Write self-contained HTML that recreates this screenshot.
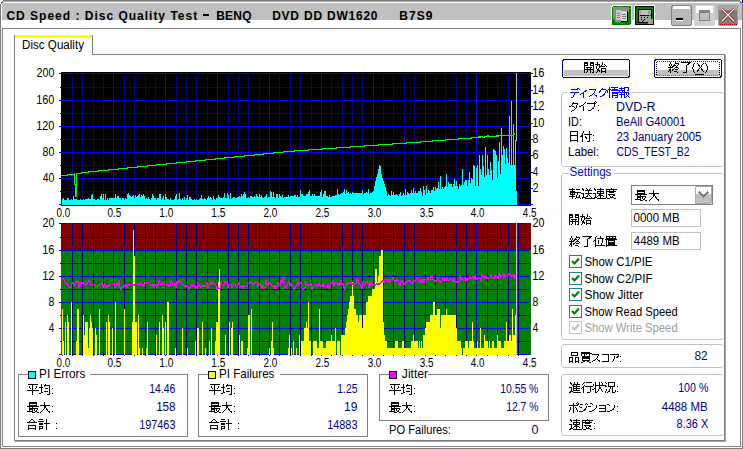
<!DOCTYPE html>
<html><head><meta charset="utf-8"><style>
html,body{margin:0;padding:0;width:743px;height:449px;overflow:hidden;background:#fff}
svg{display:block}
text{font-family:"Liberation Sans",sans-serif}
</style></head><body>
<svg width="743" height="449" viewBox="0 0 743 449" shape-rendering="crispEdges">
<rect x="0" y="0" width="743" height="449" fill="#ffffff"/>
<rect x="0" y="0" width="743" height="20" fill="#c0c0c0"/>
<rect x="3" y="0" width="740" height="1" fill="#7a7a7a"/>
<rect x="4" y="1" width="737" height="1" fill="#a8a8a8"/>
<rect x="4" y="2" width="737" height="1" fill="#ffffff"/>
<rect x="0" y="4" width="1" height="445" fill="#7a7a7a"/>
<rect x="1" y="4" width="1" height="445" fill="#ffffff"/>
<rect x="0" y="0" width="3" height="3" fill="#ffffff"/>
<rect x="0" y="0" width="2" height="4" fill="#ffffff"/>
<rect x="1" y="2" width="1" height="2" fill="#7a7a7a"/>
<rect x="2" y="1" width="1" height="2" fill="#7a7a7a"/>
<rect x="742" y="4" width="1" height="445" fill="#7a7a7a"/>
<rect x="740" y="0" width="3" height="3" fill="#ffffff"/>
<rect x="741" y="2" width="1" height="2" fill="#7a7a7a"/>
<rect x="740" y="1" width="1" height="2" fill="#7a7a7a"/>
<rect x="0" y="448" width="743" height="1" fill="#7a7a7a"/>
<rect x="2" y="20" width="739" height="8" fill="#ffffff"/>
<rect x="2" y="28" width="739" height="1" fill="#808080"/>
<rect x="2" y="28" width="1" height="419" fill="#808080"/>
<rect x="740" y="28" width="1" height="419" fill="#808080"/>
<rect x="2" y="446" width="739" height="1" fill="#808080"/>
<text x="6.44" y="20" fill="#000" font-size="12" font-weight="bold" textLength="190.72" lengthAdjust="spacing">CD Speed : Disc Quality Test</text>
<rect x="203" y="14" width="6" height="2" fill="#000"/>
<text x="216.21" y="20" fill="#000" font-size="12" font-weight="bold" textLength="35.34" lengthAdjust="spacing">BENQ</text>
<text x="272.14" y="20" fill="#000" font-size="12" font-weight="bold" textLength="105.41" lengthAdjust="spacing">DVD DD DW1620</text>
<text x="399.13" y="20" fill="#000" font-size="12" font-weight="bold" textLength="33.35" lengthAdjust="spacing">B7S9</text>
<rect x="611" y="5" width="21" height="21" fill="#ffffff" rx="2"/>
<rect x="612" y="6" width="19" height="19" fill="#008000" rx="2"/>
<path d="M613 7h15l1 1v2l-3 3v9h-10l-3 -3z" fill="#8c8c8c"/>
<rect x="616" y="10" width="5" height="10" fill="#c8c8c8"/>
<rect x="617" y="13" width="3" height="1" fill="#808080"/>
<rect x="617" y="15" width="3" height="1" fill="#808080"/>
<rect x="617" y="17" width="3" height="1" fill="#808080"/>
<rect x="621" y="11" width="7" height="11" fill="#000000"/>
<rect x="621" y="11" width="6" height="10" fill="#d8d8d8"/>
<rect x="622" y="14" width="4" height="1" fill="#808080"/>
<rect x="622" y="16" width="4" height="1" fill="#808080"/>
<rect x="622" y="18" width="4" height="1" fill="#808080"/>
<rect x="626" y="9" width="1" height="1" fill="#00ff00"/>
<rect x="628" y="11" width="1" height="1" fill="#00ff00"/>
<rect x="629" y="8" width="1" height="1" fill="#00ff00"/>
<rect x="614" y="15" width="1" height="1" fill="#00ff00"/>
<rect x="614" y="19" width="1" height="1" fill="#00ff00"/>
<rect x="615" y="21" width="1" height="1" fill="#00ff00"/>
<rect x="617" y="22" width="1" height="1" fill="#00ff00"/>
<rect x="619" y="22" width="1" height="1" fill="#00ff00"/>
<rect x="622" y="23" width="1" height="1" fill="#00ff00"/>
<rect x="620" y="6" width="1" height="1" fill="#00ff00"/>
<rect x="634" y="5" width="21" height="21" fill="#ffffff" rx="2"/>
<rect x="635" y="6" width="19" height="19" fill="#000000"/>
<rect x="636" y="7" width="17" height="17" fill="#008000"/>
<rect x="638" y="9" width="14" height="14" fill="#000000"/>
<rect x="639" y="10" width="12" height="12" fill="#a0a0a0"/>
<rect x="648" y="19" width="5" height="5" fill="#a0a0a0"/>
<rect x="641" y="10" width="7" height="5" fill="#c0c0c0"/>
<rect x="640" y="15" width="9" height="1" fill="#000000"/>
<rect x="641" y="17" width="1" height="1" fill="#000000"/>
<rect x="644" y="17" width="1" height="1" fill="#000000"/>
<rect x="647" y="17" width="1" height="1" fill="#000000"/>
<rect x="641" y="19" width="1" height="1" fill="#000000"/>
<rect x="643" y="20" width="1" height="1" fill="#000000"/>
<rect x="644" y="19" width="1" height="1" fill="#000000"/>
<rect x="642" y="21" width="1" height="1" fill="#000000"/>
<rect x="646" y="15" width="1" height="1" fill="#ff0000"/>
<rect x="650" y="15" width="1" height="1" fill="#ff0000"/>
<rect x="671" y="5" width="21" height="21" fill="#808080" rx="3"/>
<rect x="672" y="6" width="19" height="19" fill="#b8b8b8" rx="2"/>
<rect x="673" y="6" width="17" height="3" fill="#ffffff"/>
<rect x="676" y="18" width="7" height="2" fill="#000000"/>
<rect x="676" y="20" width="7" height="1" fill="#ffffff"/>
<rect x="694" y="5" width="21" height="21" fill="#d0d0d0" rx="3"/>
<rect x="696" y="6" width="17" height="7" fill="#ffffff"/>
<rect x="699" y="10" width="11" height="11" fill="#808080"/>
<rect x="700" y="13" width="9" height="7" fill="#c0c0c0"/>
<rect x="718" y="5" width="20" height="21" fill="#a0a0a0" rx="3"/>
<rect x="719" y="6" width="18" height="19" fill="#7c7c7c" rx="2"/>
<rect x="719" y="6" width="18" height="4" fill="#a8a8a8"/>
<path d="M722 9 L734 21 M734 9 L722 21" stroke="#b00000" stroke-width="2.6" shape-rendering="auto"/>
<path d="M722 9 L734 21 M734 9 L722 21" stroke="#ffffff" stroke-width="1.3" shape-rendering="auto"/>
<rect x="720" y="24" width="1" height="1" fill="#c00000"/>
<rect x="722" y="24" width="1" height="1" fill="#c00000"/>
<rect x="724" y="24" width="1" height="1" fill="#c00000"/>
<rect x="726" y="24" width="1" height="1" fill="#c00000"/>
<rect x="728" y="24" width="1" height="1" fill="#c00000"/>
<rect x="730" y="24" width="1" height="1" fill="#c00000"/>
<rect x="732" y="24" width="1" height="1" fill="#c00000"/>
<rect x="734" y="24" width="1" height="1" fill="#c00000"/>
<rect x="736" y="24" width="1" height="1" fill="#c00000"/>
<rect x="742" y="0" width="1" height="3" fill="#0000ff"/>
<rect x="14" y="35" width="1" height="20" fill="#808080"/>
<rect x="92" y="35" width="1" height="20" fill="#808080"/>
<rect x="15" y="35" width="77" height="3" fill="#ffff00"/>
<text x="22.07" y="49" fill="#000" font-size="12" font-weight="normal" textLength="61.92" lengthAdjust="spacingAndGlyphs">Disc Quality</text>
<rect x="92" y="54" width="633" height="1" fill="#808080"/>
<rect x="14" y="54" width="1" height="387" fill="#808080"/>
<rect x="724" y="54" width="1" height="388" fill="#808080"/>
<rect x="725" y="55" width="1" height="387" fill="#a0a0a0"/>
<rect x="14" y="440" width="712" height="1" fill="#808080"/>
<rect x="15" y="441" width="711" height="1" fill="#a0a0a0"/>
<rect x="61" y="72" width="470" height="134" fill="#000000"/>
<rect x="61" y="223" width="470" height="132" fill="#008000"/>
<rect x="61" y="223" width="470" height="27" fill="#800000"/>
<rect x="61" y="204" width="468" height="1" fill="#0000ff"/>
<rect x="61" y="191" width="468" height="1" fill="#000090"/>
<rect x="61" y="178" width="468" height="1" fill="#0000ff"/>
<rect x="61" y="165" width="468" height="1" fill="#000090"/>
<rect x="61" y="152" width="468" height="1" fill="#0000ff"/>
<rect x="61" y="139" width="468" height="1" fill="#000090"/>
<rect x="61" y="126" width="468" height="1" fill="#0000ff"/>
<rect x="61" y="113" width="468" height="1" fill="#000090"/>
<rect x="61" y="100" width="468" height="1" fill="#0000ff"/>
<rect x="61" y="87" width="468" height="1" fill="#000090"/>
<rect x="61" y="73" width="468" height="1" fill="#0000ff"/>
<rect x="72" y="73" width="1" height="132" fill="#000090"/>
<rect x="82" y="73" width="1" height="132" fill="#000090"/>
<rect x="93" y="73" width="1" height="132" fill="#000090"/>
<rect x="103" y="73" width="1" height="132" fill="#000090"/>
<rect x="113" y="73" width="1" height="132" fill="#0000ff"/>
<rect x="124" y="73" width="1" height="132" fill="#000090"/>
<rect x="134" y="73" width="1" height="132" fill="#000090"/>
<rect x="145" y="73" width="1" height="132" fill="#000090"/>
<rect x="155" y="73" width="1" height="132" fill="#000090"/>
<rect x="165" y="73" width="1" height="132" fill="#0000ff"/>
<rect x="176" y="73" width="1" height="132" fill="#000090"/>
<rect x="186" y="73" width="1" height="132" fill="#000090"/>
<rect x="196" y="73" width="1" height="132" fill="#000090"/>
<rect x="207" y="73" width="1" height="132" fill="#000090"/>
<rect x="217" y="73" width="1" height="132" fill="#0000ff"/>
<rect x="228" y="73" width="1" height="132" fill="#000090"/>
<rect x="238" y="73" width="1" height="132" fill="#000090"/>
<rect x="248" y="73" width="1" height="132" fill="#000090"/>
<rect x="259" y="73" width="1" height="132" fill="#000090"/>
<rect x="269" y="73" width="1" height="132" fill="#0000ff"/>
<rect x="279" y="73" width="1" height="132" fill="#000090"/>
<rect x="290" y="73" width="1" height="132" fill="#000090"/>
<rect x="300" y="73" width="1" height="132" fill="#000090"/>
<rect x="311" y="73" width="1" height="132" fill="#000090"/>
<rect x="321" y="73" width="1" height="132" fill="#0000ff"/>
<rect x="331" y="73" width="1" height="132" fill="#000090"/>
<rect x="342" y="73" width="1" height="132" fill="#000090"/>
<rect x="352" y="73" width="1" height="132" fill="#000090"/>
<rect x="362" y="73" width="1" height="132" fill="#000090"/>
<rect x="373" y="73" width="1" height="132" fill="#0000ff"/>
<rect x="383" y="73" width="1" height="132" fill="#000090"/>
<rect x="393" y="73" width="1" height="132" fill="#000090"/>
<rect x="404" y="73" width="1" height="132" fill="#000090"/>
<rect x="414" y="73" width="1" height="132" fill="#000090"/>
<rect x="425" y="73" width="1" height="132" fill="#0000ff"/>
<rect x="435" y="73" width="1" height="132" fill="#000090"/>
<rect x="445" y="73" width="1" height="132" fill="#000090"/>
<rect x="456" y="73" width="1" height="132" fill="#000090"/>
<rect x="466" y="73" width="1" height="132" fill="#000090"/>
<rect x="476" y="73" width="1" height="132" fill="#0000ff"/>
<rect x="487" y="73" width="1" height="132" fill="#000090"/>
<rect x="497" y="73" width="1" height="132" fill="#000090"/>
<rect x="508" y="73" width="1" height="132" fill="#000090"/>
<rect x="518" y="73" width="1" height="132" fill="#000090"/>
<rect x="61" y="354" width="468" height="1" fill="#0000ff"/>
<rect x="61" y="341" width="468" height="1" fill="#000090"/>
<rect x="61" y="328" width="468" height="1" fill="#0000ff"/>
<rect x="61" y="315" width="468" height="1" fill="#000090"/>
<rect x="61" y="302" width="468" height="1" fill="#0000ff"/>
<rect x="61" y="289" width="468" height="1" fill="#000090"/>
<rect x="61" y="276" width="468" height="1" fill="#0000ff"/>
<rect x="61" y="263" width="468" height="1" fill="#000090"/>
<rect x="61" y="250" width="468" height="1" fill="#0000ff"/>
<rect x="61" y="237" width="468" height="1" fill="#000090"/>
<rect x="61" y="223" width="468" height="1" fill="#0000ff"/>
<rect x="72" y="223" width="1" height="132" fill="#000090"/>
<rect x="82" y="223" width="1" height="132" fill="#000090"/>
<rect x="93" y="223" width="1" height="132" fill="#000090"/>
<rect x="103" y="223" width="1" height="132" fill="#000090"/>
<rect x="113" y="223" width="1" height="132" fill="#0000ff"/>
<rect x="124" y="223" width="1" height="132" fill="#000090"/>
<rect x="134" y="223" width="1" height="132" fill="#000090"/>
<rect x="145" y="223" width="1" height="132" fill="#000090"/>
<rect x="155" y="223" width="1" height="132" fill="#000090"/>
<rect x="165" y="223" width="1" height="132" fill="#0000ff"/>
<rect x="176" y="223" width="1" height="132" fill="#000090"/>
<rect x="186" y="223" width="1" height="132" fill="#000090"/>
<rect x="196" y="223" width="1" height="132" fill="#000090"/>
<rect x="207" y="223" width="1" height="132" fill="#000090"/>
<rect x="217" y="223" width="1" height="132" fill="#0000ff"/>
<rect x="228" y="223" width="1" height="132" fill="#000090"/>
<rect x="238" y="223" width="1" height="132" fill="#000090"/>
<rect x="248" y="223" width="1" height="132" fill="#000090"/>
<rect x="259" y="223" width="1" height="132" fill="#000090"/>
<rect x="269" y="223" width="1" height="132" fill="#0000ff"/>
<rect x="279" y="223" width="1" height="132" fill="#000090"/>
<rect x="290" y="223" width="1" height="132" fill="#000090"/>
<rect x="300" y="223" width="1" height="132" fill="#000090"/>
<rect x="311" y="223" width="1" height="132" fill="#000090"/>
<rect x="321" y="223" width="1" height="132" fill="#0000ff"/>
<rect x="331" y="223" width="1" height="132" fill="#000090"/>
<rect x="342" y="223" width="1" height="132" fill="#000090"/>
<rect x="352" y="223" width="1" height="132" fill="#000090"/>
<rect x="362" y="223" width="1" height="132" fill="#000090"/>
<rect x="373" y="223" width="1" height="132" fill="#0000ff"/>
<rect x="383" y="223" width="1" height="132" fill="#000090"/>
<rect x="393" y="223" width="1" height="132" fill="#000090"/>
<rect x="404" y="223" width="1" height="132" fill="#000090"/>
<rect x="414" y="223" width="1" height="132" fill="#000090"/>
<rect x="425" y="223" width="1" height="132" fill="#0000ff"/>
<rect x="435" y="223" width="1" height="132" fill="#000090"/>
<rect x="445" y="223" width="1" height="132" fill="#000090"/>
<rect x="456" y="223" width="1" height="132" fill="#000090"/>
<rect x="466" y="223" width="1" height="132" fill="#000090"/>
<rect x="476" y="223" width="1" height="132" fill="#0000ff"/>
<rect x="487" y="223" width="1" height="132" fill="#000090"/>
<rect x="497" y="223" width="1" height="132" fill="#000090"/>
<rect x="508" y="223" width="1" height="132" fill="#000090"/>
<rect x="518" y="223" width="1" height="132" fill="#000090"/>
<path d="M62 199h1V205h-1zM63 198h1V205h-1zM64 200h1V205h-1zM65 200h1V205h-1zM66 200h1V205h-1zM67 198h1V205h-1zM68 198h1V205h-1zM69 200h1V205h-1zM70 200h1V205h-1zM71 199h1V205h-1zM72 200h1V205h-1zM73 196h1V205h-1zM74 199h1V205h-1zM75 199h1V205h-1zM76 199h1V205h-1zM77 200h1V205h-1zM78 200h1V205h-1zM79 200h1V205h-1zM80 199h1V205h-1zM81 200h1V205h-1zM82 200h1V205h-1zM83 199h1V205h-1zM84 200h1V205h-1zM85 199h1V205h-1zM86 199h1V205h-1zM87 199h1V205h-1zM88 198h1V205h-1zM89 199h1V205h-1zM90 199h1V205h-1zM91 195h1V205h-1zM92 194h1V205h-1zM93 199h1V205h-1zM94 199h1V205h-1zM95 200h1V205h-1zM96 200h1V205h-1zM97 199h1V205h-1zM98 199h1V205h-1zM99 200h1V205h-1zM100 196h1V205h-1zM101 194h1V205h-1zM102 198h1V205h-1zM103 194h1V205h-1zM104 200h1V205h-1zM105 194h1V205h-1zM106 200h1V205h-1zM107 198h1V205h-1zM108 200h1V205h-1zM109 198h1V205h-1zM110 198h1V205h-1zM111 198h1V205h-1zM112 198h1V205h-1zM113 198h1V205h-1zM114 198h1V205h-1zM115 194h1V205h-1zM116 198h1V205h-1zM117 196h1V205h-1zM118 196h1V205h-1zM119 198h1V205h-1zM120 198h1V205h-1zM121 200h1V205h-1zM122 198h1V205h-1zM123 198h1V205h-1zM124 200h1V205h-1zM125 198h1V205h-1zM126 199h1V205h-1zM127 194h1V205h-1zM128 193h1V205h-1zM129 195h1V205h-1zM130 196h1V205h-1zM131 197h1V205h-1zM132 196h1V205h-1zM133 195h1V205h-1zM134 198h1V205h-1zM135 195h1V205h-1zM136 197h1V205h-1zM137 196h1V205h-1zM138 195h1V205h-1zM139 194h1V205h-1zM140 197h1V205h-1zM141 195h1V205h-1zM142 196h1V205h-1zM143 194h1V205h-1zM144 196h1V205h-1zM145 199h1V205h-1zM146 198h1V205h-1zM147 199h1V205h-1zM148 197h1V205h-1zM149 199h1V205h-1zM150 200h1V205h-1zM151 198h1V205h-1zM152 194h1V205h-1zM153 196h1V205h-1zM154 198h1V205h-1zM155 198h1V205h-1zM156 200h1V205h-1zM157 198h1V205h-1zM158 198h1V205h-1zM159 194h1V205h-1zM160 194h1V205h-1zM161 200h1V205h-1zM162 198h1V205h-1zM163 196h1V205h-1zM164 200h1V205h-1zM165 194h1V205h-1zM166 197h1V205h-1zM167 199h1V205h-1zM168 199h1V205h-1zM169 200h1V205h-1zM170 198h1V205h-1zM171 200h1V205h-1zM172 200h1V205h-1zM173 200h1V205h-1zM174 199h1V205h-1zM175 196h1V205h-1zM176 194h1V205h-1zM177 200h1V205h-1zM178 199h1V205h-1zM179 193h1V205h-1zM180 199h1V205h-1zM181 200h1V205h-1zM182 198h1V205h-1zM183 200h1V205h-1zM184 197h1V205h-1zM185 200h1V205h-1zM186 198h1V205h-1zM187 195h1V205h-1zM188 200h1V205h-1zM189 197h1V205h-1zM190 197h1V205h-1zM191 199h1V205h-1zM192 200h1V205h-1zM193 200h1V205h-1zM194 199h1V205h-1zM195 200h1V205h-1zM196 199h1V205h-1zM197 200h1V205h-1zM198 200h1V205h-1zM199 199h1V205h-1zM200 198h1V205h-1zM201 195h1V205h-1zM202 199h1V205h-1zM203 199h1V205h-1zM204 198h1V205h-1zM205 199h1V205h-1zM206 200h1V205h-1zM207 198h1V205h-1zM208 196h1V205h-1zM209 198h1V205h-1zM210 197h1V205h-1zM211 198h1V205h-1zM212 200h1V205h-1zM213 196h1V205h-1zM214 199h1V205h-1zM215 200h1V205h-1zM216 198h1V205h-1zM217 198h1V205h-1zM218 195h1V205h-1zM219 197h1V205h-1zM220 198h1V205h-1zM221 198h1V205h-1zM222 198h1V205h-1zM223 197h1V205h-1zM224 193h1V205h-1zM225 198h1V205h-1zM226 198h1V205h-1zM227 193h1V205h-1zM228 195h1V205h-1zM229 199h1V205h-1zM230 193h1V205h-1zM231 199h1V205h-1zM232 198h1V205h-1zM233 197h1V205h-1zM234 197h1V205h-1zM235 198h1V205h-1zM236 198h1V205h-1zM237 197h1V205h-1zM238 197h1V205h-1zM239 196h1V205h-1zM240 197h1V205h-1zM241 194h1V205h-1zM242 196h1V205h-1zM243 194h1V205h-1zM244 192h1V205h-1zM245 194h1V205h-1zM246 198h1V205h-1zM247 198h1V205h-1zM248 197h1V205h-1zM249 198h1V205h-1zM250 196h1V205h-1zM251 196h1V205h-1zM252 197h1V205h-1zM253 197h1V205h-1zM254 196h1V205h-1zM255 197h1V205h-1zM256 194h1V205h-1zM257 196h1V205h-1zM258 197h1V205h-1zM259 194h1V205h-1zM260 197h1V205h-1zM261 195h1V205h-1zM262 197h1V205h-1zM263 198h1V205h-1zM264 197h1V205h-1zM265 196h1V205h-1zM266 194h1V205h-1zM267 198h1V205h-1zM268 197h1V205h-1zM269 197h1V205h-1zM270 191h1V205h-1zM271 192h1V205h-1zM272 197h1V205h-1zM273 192h1V205h-1zM274 197h1V205h-1zM275 198h1V205h-1zM276 194h1V205h-1zM277 194h1V205h-1zM278 198h1V205h-1zM279 194h1V205h-1zM280 196h1V205h-1zM281 197h1V205h-1zM282 195h1V205h-1zM283 198h1V205h-1zM284 197h1V205h-1zM285 197h1V205h-1zM286 197h1V205h-1zM287 197h1V205h-1zM288 195h1V205h-1zM289 197h1V205h-1zM290 196h1V205h-1zM291 196h1V205h-1zM292 196h1V205h-1zM293 196h1V205h-1zM294 195h1V205h-1zM295 195h1V205h-1zM296 197h1V205h-1zM297 195h1V205h-1zM298 197h1V205h-1zM299 197h1V205h-1zM300 190h1V205h-1zM301 194h1V205h-1zM302 194h1V205h-1zM303 196h1V205h-1zM304 196h1V205h-1zM305 196h1V205h-1zM306 194h1V205h-1zM307 194h1V205h-1zM308 192h1V205h-1zM309 190h1V205h-1zM310 196h1V205h-1zM311 196h1V205h-1zM312 194h1V205h-1zM313 196h1V205h-1zM314 194h1V205h-1zM315 196h1V205h-1zM316 196h1V205h-1zM317 196h1V205h-1zM318 196h1V205h-1zM319 196h1V205h-1zM320 192h1V205h-1zM321 190h1V205h-1zM322 197h1V205h-1zM323 194h1V205h-1zM324 191h1V205h-1zM325 191h1V205h-1zM326 196h1V205h-1zM327 196h1V205h-1zM328 197h1V205h-1zM329 195h1V205h-1zM330 197h1V205h-1zM331 197h1V205h-1zM332 196h1V205h-1zM333 196h1V205h-1zM334 196h1V205h-1zM335 195h1V205h-1zM336 195h1V205h-1zM337 189h1V205h-1zM338 194h1V205h-1zM339 195h1V205h-1zM340 194h1V205h-1zM341 193h1V205h-1zM342 193h1V205h-1zM343 192h1V205h-1zM344 189h1V205h-1zM345 194h1V205h-1zM346 190h1V205h-1zM347 193h1V205h-1zM348 192h1V205h-1zM349 194h1V205h-1zM350 193h1V205h-1zM351 194h1V205h-1zM352 192h1V205h-1zM353 193h1V205h-1zM354 193h1V205h-1zM355 193h1V205h-1zM356 193h1V205h-1zM357 193h1V205h-1zM358 193h1V205h-1zM359 193h1V205h-1zM360 193h1V205h-1zM361 193h1V205h-1zM362 190h1V205h-1zM363 194h1V205h-1zM364 193h1V205h-1zM365 193h1V205h-1zM366 192h1V205h-1zM367 193h1V205h-1zM368 189h1V205h-1zM369 194h1V205h-1zM370 193h1V205h-1zM371 193h1V205h-1zM372 192h1V205h-1zM373 191h1V205h-1zM374 186h1V205h-1zM375 181h1V205h-1zM376 177h1V205h-1zM377 174h1V205h-1zM378 169h1V205h-1zM379 165h1V205h-1zM380 166h1V205h-1zM381 174h1V205h-1zM382 178h1V205h-1zM383 181h1V205h-1zM384 184h1V205h-1zM385 187h1V205h-1zM386 191h1V205h-1zM387 196h1V205h-1zM388 194h1V205h-1zM389 195h1V205h-1zM390 196h1V205h-1zM391 191h1V205h-1zM392 195h1V205h-1zM393 192h1V205h-1zM394 195h1V205h-1zM395 195h1V205h-1zM396 194h1V205h-1zM397 195h1V205h-1zM398 196h1V205h-1zM399 194h1V205h-1zM400 192h1V205h-1zM401 196h1V205h-1zM402 195h1V205h-1zM403 193h1V205h-1zM404 195h1V205h-1zM405 189h1V205h-1zM406 195h1V205h-1zM407 192h1V205h-1zM408 193h1V205h-1zM409 194h1V205h-1zM410 193h1V205h-1zM411 190h1V205h-1zM412 193h1V205h-1zM413 188h1V205h-1zM414 193h1V205h-1zM415 191h1V205h-1zM416 193h1V205h-1zM417 193h1V205h-1zM418 191h1V205h-1zM419 191h1V205h-1zM420 188h1V205h-1zM421 192h1V205h-1zM422 196h1V205h-1zM423 186h1V205h-1zM424 190h1V205h-1zM425 195h1V205h-1zM426 186h1V205h-1zM427 193h1V205h-1zM428 190h1V205h-1zM429 191h1V205h-1zM430 193h1V205h-1zM431 190h1V205h-1zM432 190h1V205h-1zM433 187h1V205h-1zM434 191h1V205h-1zM435 187h1V205h-1zM436 189h1V205h-1zM437 188h1V205h-1zM438 182h1V205h-1zM439 189h1V205h-1zM440 176h1V205h-1zM441 189h1V205h-1zM442 187h1V205h-1zM443 189h1V205h-1zM444 187h1V205h-1zM445 186h1V205h-1zM446 174h1V205h-1zM447 187h1V205h-1zM448 182h1V205h-1zM449 184h1V205h-1zM450 184h1V205h-1zM451 184h1V205h-1zM452 187h1V205h-1zM453 184h1V205h-1zM454 179h1V205h-1zM455 186h1V205h-1zM456 181h1V205h-1zM457 186h1V205h-1zM458 189h1V205h-1zM459 184h1V205h-1zM460 186h1V205h-1zM461 185h1V205h-1zM462 169h1V205h-1zM463 185h1V205h-1zM464 182h1V205h-1zM465 180h1V205h-1zM466 180h1V205h-1zM467 186h1V205h-1zM468 180h1V205h-1zM469 172h1V205h-1zM470 183h1V205h-1zM471 178h1V205h-1zM472 179h1V205h-1zM473 165h1V205h-1zM474 166h1V205h-1zM475 186h1V205h-1zM476 168h1V205h-1zM477 165h1V205h-1zM478 186h1V205h-1zM479 155h1V205h-1zM480 169h1V205h-1zM481 175h1V205h-1zM482 155h1V205h-1zM483 166h1V205h-1zM484 177h1V205h-1zM485 147h1V205h-1zM486 175h1V205h-1zM487 155h1V205h-1zM488 169h1V205h-1zM489 175h1V205h-1zM490 162h1V205h-1zM491 170h1V205h-1zM492 180h1V205h-1zM493 149h1V205h-1zM494 150h1V205h-1zM495 151h1V205h-1zM496 155h1V205h-1zM497 178h1V205h-1zM498 161h1V205h-1zM499 142h1V205h-1zM500 174h1V205h-1zM501 128h1V205h-1zM502 155h1V205h-1zM503 146h1V205h-1zM504 149h1V205h-1zM505 164h1V205h-1zM506 148h1V205h-1zM507 158h1V205h-1zM508 163h1V205h-1zM509 116h1V205h-1zM510 165h1V205h-1zM511 101h1V205h-1zM512 165h1V205h-1zM513 124h1V205h-1zM514 165h1V205h-1zM515 140h1V205h-1zM516 191h1V205h-1z" fill="#00ffff"/>
<rect x="516" y="73" width="1" height="68" fill="#c0c0c0"/>
<path d="M61 175.5 L62 175.5 L63 175.5 L64 175.5 L65 175.5 L66 175.5 L67 175.5 L68 174.5 L69 174.5 L70 174.5 L71 174.5 L72 174.5 L73 174.5 L74 174.5 M76 173.5 L77 173.5 L78 173.5 L79 173.5 L80 173.5 L81 173.5 L82 172.5 L83 172.5 L84 172.5 L85 172.5 L86 172.5 L87 172.5 L88 172.5 L89 171.5 L90 171.5 L91 171.5 L92 171.5 L93 171.5 L94 171.5 L95 171.5 L96 171.5 L97 171.5 L98 171.5 L99 170.5 L100 170.5 L101 170.5 L102 170.5 L103 170.5 L104 170.5 L105 170.5 L106 170.5 L107 170.5 L108 170.5 L109 169.5 L110 169.5 L111 169.5 L112 169.5 L113 169.5 L114 169.5 L115 169.5 L116 169.5 L117 169.5 L118 169.5 L119 168.5 L120 168.5 L121 168.5 L122 168.5 L123 168.5 L124 168.5 L125 168.5 L126 168.5 L127 168.5 L128 167.5 L129 167.5 L130 167.5 L131 167.5 L132 167.5 L133 167.5 L134 167.5 L135 167.5 L136 167.5 L137 167.5 L138 166.5 L139 166.5 L140 166.5 L141 166.5 L142 166.5 L143 166.5 L144 166.5 L145 166.5 L146 166.5 L147 166.5 L148 165.5 L149 165.5 L150 165.5 L151 165.5 L152 165.5 L153 165.5 L154 165.5 L155 165.5 L156 165.5 L157 164.5 L158 164.5 L159 164.5 L160 164.5 L161 164.5 L162 164.5 L163 164.5 L164 164.5 L165 164.5 L166 164.5 L167 163.5 L168 163.5 L169 163.5 L170 163.5 L171 163.5 L172 163.5 L173 163.5 L174 163.5 L175 163.5 L176 163.5 L177 162.5 L178 162.5 L179 162.5 L180 162.5 L181 162.5 L182 162.5 L183 162.5 L184 162.5 L185 162.5 L186 162.5 L187 161.5 L188 161.5 L189 161.5 L190 161.5 L191 161.5 L192 161.5 L193 161.5 L194 161.5 L195 161.5 L196 160.5 L197 160.5 L198 160.5 L199 160.5 L200 160.5 L201 160.5 L202 160.5 L203 160.5 L204 160.5 L205 160.5 L206 159.5 L207 159.5 L208 159.5 L209 159.5 L210 159.5 L211 159.5 L212 159.5 L213 159.5 L214 159.5 L215 159.5 L216 158.5 L217 158.5 L218 158.5 L219 158.5 L220 158.5 L221 158.5 L222 158.5 L223 158.5 L224 158.5 L225 157.5 L226 157.5 L227 157.5 L228 157.5 L229 157.5 L230 157.5 L231 157.5 L232 157.5 L233 157.5 L234 157.5 L235 156.5 L236 156.5 L237 156.5 L238 156.5 L239 156.5 L240 156.5 L241 156.5 L242 156.5 L243 156.5 L244 156.5 L245 155.5 L246 155.5 L247 155.5 L248 155.5 L249 155.5 L250 155.5 L251 155.5 L252 155.5 L253 155.5 L254 155.5 L255 154.5 L256 154.5 L257 154.5 L258 154.5 L259 154.5 L260 154.5 L261 154.5 L262 154.5 L263 154.5 L264 153.5 L265 153.5 L266 153.5 L267 153.5 L268 153.5 L269 153.5 L270 153.5 L271 153.5 L272 153.5 L273 153.5 L274 152.5 L275 152.5 L276 152.5 L277 152.5 L278 152.5 L279 152.5 L280 152.5 L281 152.5 L282 152.5 L283 152.5 L284 151.5 L285 151.5 L286 151.5 L287 151.5 L288 151.5 L289 151.5 L290 151.5 L291 151.5 L292 151.5 L293 151.5 L294 151.5 L295 150.5 L296 150.5 L297 150.5 L298 150.5 L299 150.5 L300 150.5 L301 150.5 L302 150.5 L303 150.5 L304 150.5 L305 150.5 L306 150.5 L307 150.5 L308 150.5 L309 149.5 L310 149.5 L311 149.5 L312 149.5 L313 149.5 L314 149.5 L315 149.5 L316 149.5 L317 149.5 L318 149.5 L319 149.5 L320 149.5 L321 149.5 L322 149.5 L323 148.5 L324 148.5 L325 148.5 L326 148.5 L327 148.5 L328 148.5 L329 148.5 L330 148.5 L331 148.5 L332 148.5 L333 148.5 L334 148.5 L335 148.5 L336 148.5 L337 147.5 L338 147.5 L339 147.5 L340 147.5 L341 147.5 L342 147.5 L343 147.5 L344 147.5 L345 147.5 L346 147.5 L347 147.5 L348 147.5 L349 147.5 L350 147.5 L351 146.5 L352 146.5 L353 146.5 L354 146.5 L355 146.5 L356 146.5 L357 146.5 L358 146.5 L359 146.5 L360 146.5 L361 146.5 L362 146.5 L363 146.5 L364 146.5 L365 145.5 L366 145.5 L367 145.5 L368 145.5 L369 145.5 L370 145.5 L371 145.5 L372 145.5 L373 145.5 L374 145.5 L375 145.5 L376 145.5 L377 145.5 L378 145.5 L379 144.5 L380 144.5 L381 144.5 L382 144.5 L383 144.5 L384 144.5 L385 144.5 L386 144.5 L387 144.5 L388 144.5 L389 144.5 L390 144.5 L391 144.5 L392 144.5 L393 143.5 L394 143.5 L395 143.5 L396 143.5 L397 143.5 L398 143.5 L399 143.5 L400 143.5 L401 143.5 L402 143.5 L403 143.5 L404 143.5 L405 143.5 L406 143.5 L407 142.5 L408 142.5 L409 142.5 L410 142.5 L411 142.5 L412 142.5 L413 142.5 L414 142.5 L415 142.5 L416 142.5 L417 142.5 L418 142.5 L419 142.5 L420 142.5 L421 141.5 L422 141.5 L423 141.5 L424 141.5 L425 141.5 L426 141.5 L427 141.5 L428 141.5 L429 141.5 L430 141.5 L431 141.5 L432 141.5 L433 140.5 L434 140.5 L435 140.5 L436 140.5 L437 140.5 L438 140.5 L439 140.5 L440 140.5 L441 140.5 L442 140.5 L443 140.5 L444 140.5 L445 140.5 L446 139.5 L447 139.5 L448 139.5 L449 139.5 L450 139.5 L451 139.5 L452 139.5 L453 139.5 L454 139.5 L455 139.5 L456 139.5 L457 139.5 L458 139.5 L459 138.5 L460 138.5 L461 138.5 L462 138.5 L463 138.5 L464 138.5 L465 138.5 L466 138.5 L467 138.5 L468 138.5 L469 138.5 L470 138.5 L471 138.5 L472 137.5 L473 137.5 L474 137.5 L475 137.5 L476 137.5 L477 137.5 L478 137.5 L479 136.5 L480 137.5 L481 136.5 L482 136.5 L483 137.5 L484 137.5 L485 136.5 L486 136.5 L487 136.5 L488 135.5 L489 136.5 L490 136.5 L491 136.5 L492 136.5 L493 136.5 L494 136.5 L495 136.5 L496 136.5 L497 135.5 L498 136.5 L499 135.5 L500 135.5 L501 135.5 L502 135.5 L503 135.5 L504 135.5 L505 135.5 L506 135.5 L507 135.5 L508 135.5 L509 135.5 L510 135.5 L511 135.5 L512 135.5 L513 135.5 L514 133.5 L515 134.5" stroke="#00ff00" stroke-width="1" fill="none"/>
<rect x="74" y="173" width="1" height="12" fill="#00ff00"/>
<rect x="75" y="184" width="1" height="13" fill="#00ff00"/>
<rect x="76" y="173" width="1" height="24" fill="#00ff00"/>
<path d="M62 309h1V355h-1zM63 341h1V355h-1zM65 322h1V355h-1zM67 315h1V355h-1zM68 322h1V355h-1zM71 302h1V355h-1zM76 341h1V355h-1zM77 309h1V355h-1zM78 309h1V355h-1zM83 315h1V355h-1zM84 335h1V355h-1zM85 322h1V355h-1zM86 322h1V355h-1zM87 322h1V355h-1zM88 348h1V355h-1zM89 328h1V355h-1zM90 315h1V355h-1zM91 322h1V355h-1zM92 328h1V355h-1zM95 328h1V355h-1zM96 335h1V355h-1zM99 309h1V355h-1zM106 322h1V355h-1zM108 315h1V355h-1zM109 322h1V355h-1zM112 328h1V355h-1zM115 302h1V355h-1zM124 309h1V355h-1zM132 322h1V355h-1zM133 230h1V355h-1zM134 256h1V355h-1zM135 322h1V355h-1zM136 322h1V355h-1zM138 315h1V355h-1zM139 348h1V355h-1zM142 348h1V355h-1zM146 348h1V355h-1zM147 322h1V355h-1zM156 335h1V355h-1zM159 322h1V355h-1zM162 315h1V355h-1zM163 328h1V355h-1zM165 322h1V355h-1zM167 302h1V355h-1zM168 302h1V355h-1zM175 348h1V355h-1zM182 328h1V355h-1zM187 348h1V355h-1zM195 341h1V355h-1zM197 328h1V355h-1zM198 328h1V355h-1zM202 322h1V355h-1zM205 348h1V355h-1zM209 341h1V355h-1zM211 328h1V355h-1zM215 341h1V355h-1zM216 322h1V355h-1zM217 322h1V355h-1zM218 282h1V355h-1zM219 269h1V355h-1zM225 335h1V355h-1zM229 322h1V355h-1zM231 328h1V355h-1zM232 322h1V355h-1zM239 335h1V355h-1zM241 341h1V355h-1zM242 341h1V355h-1zM247 348h1V355h-1zM248 315h1V355h-1zM249 315h1V355h-1zM251 309h1V355h-1zM269 348h1V355h-1zM271 341h1V355h-1zM272 322h1V355h-1zM273 348h1V355h-1zM288 348h1V355h-1zM289 335h1V355h-1zM291 348h1V355h-1zM293 341h1V355h-1zM296 348h1V355h-1zM299 335h1V355h-1zM301 341h1V355h-1zM302 341h1V355h-1zM303 341h1V355h-1zM304 328h1V355h-1zM305 328h1V355h-1zM306 322h1V355h-1zM307 328h1V355h-1zM308 302h1V355h-1zM309 341h1V355h-1zM310 341h1V355h-1zM313 341h1V355h-1zM314 341h1V355h-1zM315 341h1V355h-1zM316 341h1V355h-1zM317 348h1V355h-1zM318 348h1V355h-1zM319 309h1V355h-1zM320 341h1V355h-1zM321 341h1V355h-1zM322 341h1V355h-1zM323 348h1V355h-1zM324 348h1V355h-1zM325 348h1V355h-1zM326 341h1V355h-1zM327 341h1V355h-1zM328 341h1V355h-1zM329 341h1V355h-1zM330 341h1V355h-1zM331 335h1V355h-1zM332 341h1V355h-1zM333 341h1V355h-1zM334 341h1V355h-1zM335 328h1V355h-1zM337 341h1V355h-1zM338 341h1V355h-1zM339 341h1V355h-1zM341 335h1V355h-1zM342 335h1V355h-1zM343 335h1V355h-1zM344 335h1V355h-1zM345 328h1V355h-1zM346 322h1V355h-1zM347 315h1V355h-1zM348 309h1V355h-1zM349 302h1V355h-1zM350 296h1V355h-1zM351 296h1V355h-1zM352 282h1V355h-1zM353 296h1V355h-1zM354 309h1V355h-1zM355 309h1V355h-1zM356 315h1V355h-1zM357 315h1V355h-1zM358 322h1V355h-1zM359 315h1V355h-1zM360 315h1V355h-1zM361 315h1V355h-1zM362 328h1V355h-1zM363 315h1V355h-1zM364 315h1V355h-1zM365 315h1V355h-1zM366 302h1V355h-1zM367 302h1V355h-1zM368 296h1V355h-1zM369 296h1V355h-1zM370 296h1V355h-1zM371 296h1V355h-1zM372 289h1V355h-1zM373 289h1V355h-1zM374 289h1V355h-1zM375 269h1V355h-1zM376 269h1V355h-1zM377 282h1V355h-1zM378 276h1V355h-1zM379 256h1V355h-1zM380 256h1V355h-1zM381 250h1V355h-1zM382 250h1V355h-1zM383 322h1V355h-1zM384 335h1V355h-1zM385 341h1V355h-1zM386 341h1V355h-1zM387 348h1V355h-1zM388 348h1V355h-1zM389 348h1V355h-1zM390 348h1V355h-1zM391 348h1V355h-1zM392 348h1V355h-1zM393 348h1V355h-1zM394 348h1V355h-1zM395 341h1V355h-1zM396 341h1V355h-1zM397 341h1V355h-1zM398 348h1V355h-1zM399 348h1V355h-1zM400 348h1V355h-1zM401 348h1V355h-1zM402 341h1V355h-1zM403 341h1V355h-1zM404 348h1V355h-1zM405 348h1V355h-1zM406 348h1V355h-1zM407 348h1V355h-1zM408 348h1V355h-1zM409 348h1V355h-1zM410 348h1V355h-1zM411 341h1V355h-1zM412 341h1V355h-1zM413 335h1V355h-1zM414 341h1V355h-1zM415 341h1V355h-1zM416 341h1V355h-1zM417 341h1V355h-1zM418 348h1V355h-1zM419 341h1V355h-1zM420 348h1V355h-1zM421 341h1V355h-1zM422 348h1V355h-1zM423 335h1V355h-1zM424 335h1V355h-1zM425 328h1V355h-1zM426 322h1V355h-1zM427 322h1V355h-1zM428 322h1V355h-1zM429 322h1V355h-1zM430 315h1V355h-1zM431 315h1V355h-1zM432 315h1V355h-1zM433 302h1V355h-1zM434 302h1V355h-1zM435 315h1V355h-1zM436 315h1V355h-1zM437 309h1V355h-1zM438 309h1V355h-1zM439 309h1V355h-1zM440 328h1V355h-1zM441 315h1V355h-1zM442 315h1V355h-1zM443 315h1V355h-1zM444 315h1V355h-1zM445 315h1V355h-1zM446 309h1V355h-1zM447 315h1V355h-1zM448 315h1V355h-1zM449 315h1V355h-1zM450 315h1V355h-1zM451 315h1V355h-1zM452 315h1V355h-1zM453 315h1V355h-1zM454 315h1V355h-1zM455 315h1V355h-1zM456 328h1V355h-1zM457 341h1V355h-1zM458 341h1V355h-1zM459 341h1V355h-1zM460 341h1V355h-1zM461 348h1V355h-1zM463 348h1V355h-1zM464 348h1V355h-1zM465 341h1V355h-1zM466 341h1V355h-1zM467 341h1V355h-1zM468 348h1V355h-1zM469 341h1V355h-1zM470 341h1V355h-1zM471 341h1V355h-1zM472 322h1V355h-1zM473 341h1V355h-1zM474 348h1V355h-1zM475 348h1V355h-1zM476 348h1V355h-1zM477 341h1V355h-1zM478 348h1V355h-1zM479 348h1V355h-1zM480 328h1V355h-1zM481 348h1V355h-1zM482 348h1V355h-1zM483 348h1V355h-1zM484 335h1V355h-1zM485 341h1V355h-1zM486 341h1V355h-1zM487 341h1V355h-1zM488 348h1V355h-1zM489 341h1V355h-1zM490 348h1V355h-1zM491 348h1V355h-1zM492 341h1V355h-1zM493 341h1V355h-1zM494 348h1V355h-1zM495 348h1V355h-1zM496 348h1V355h-1zM497 335h1V355h-1zM498 341h1V355h-1zM499 341h1V355h-1zM500 341h1V355h-1zM501 348h1V355h-1zM502 348h1V355h-1zM503 348h1V355h-1zM504 341h1V355h-1zM505 341h1V355h-1zM506 322h1V355h-1zM507 341h1V355h-1zM508 341h1V355h-1zM509 335h1V355h-1zM510 335h1V355h-1zM511 341h1V355h-1zM512 309h1V355h-1zM513 335h1V355h-1zM514 335h1V355h-1zM515 315h1V355h-1zM516 315h1V355h-1z" fill="#ffff00"/>
<rect x="516" y="223" width="1" height="132" fill="#c0c0c0"/>
<path d="M62 278h1v1h-1zM63 278h1v2h-1zM64 279h1v4h-1zM65 282h1v2h-1zM66 283h1v2h-1zM67 284h1v1h-1zM68 284h1v3h-1zM69 286h1v2h-1zM70 287h1v1h-1zM71 283h1v5h-1zM72 282h1v2h-1zM73 282h1v4h-1zM74 284h1v2h-1zM75 282h1v3h-1zM76 281h1v2h-1zM77 281h1v2h-1zM78 281h1v7h-1zM79 286h1v2h-1zM80 282h1v5h-1zM81 282h1v2h-1zM82 282h1v2h-1zM83 282h1v2h-1zM84 283h1v2h-1zM85 284h1v2h-1zM86 283h1v2h-1zM87 282h1v2h-1zM88 280h1v3h-1zM89 280h1v2h-1zM90 281h1v5h-1zM91 285h1v1h-1zM92 284h1v2h-1zM93 284h1v1h-1zM94 284h1v2h-1zM95 285h1v2h-1zM96 285h1v1h-1zM97 285h1v2h-1zM98 285h1v1h-1zM99 284h1v2h-1zM100 284h1v1h-1zM101 282h1v3h-1zM102 282h1v4h-1zM103 285h1v3h-1zM104 284h1v4h-1zM105 284h1v3h-1zM106 286h1v2h-1zM107 285h1v3h-1zM108 285h1v2h-1zM109 284h1v3h-1zM110 284h1v1h-1zM111 284h1v1h-1zM112 284h1v1h-1zM113 283h1v2h-1zM114 283h1v5h-1zM115 285h1v3h-1zM116 283h1v3h-1zM117 283h1v3h-1zM118 280h1v6h-1zM119 280h1v8h-1zM120 287h1v3h-1zM121 286h1v4h-1zM122 286h1v2h-1zM123 285h1v3h-1zM124 285h1v2h-1zM125 284h1v2h-1zM126 284h1v4h-1zM127 285h1v3h-1zM128 284h1v2h-1zM129 284h1v2h-1zM130 284h1v1h-1zM131 284h1v1h-1zM132 284h1v2h-1zM133 284h1v2h-1zM134 284h1v2h-1zM135 284h1v1h-1zM136 284h1v1h-1zM137 283h1v2h-1zM138 283h1v3h-1zM139 284h1v2h-1zM140 282h1v3h-1zM141 282h1v4h-1zM142 284h1v2h-1zM143 284h1v3h-1zM144 282h1v5h-1zM145 282h1v2h-1zM146 282h1v1h-1zM147 282h1v1h-1zM148 282h1v2h-1zM149 283h1v2h-1zM150 284h1v2h-1zM151 285h1v1h-1zM152 284h1v2h-1zM153 284h1v4h-1zM154 284h1v4h-1zM155 284h1v2h-1zM156 285h1v3h-1zM157 284h1v4h-1zM158 280h1v5h-1zM159 280h1v3h-1zM160 282h1v4h-1zM161 284h1v2h-1zM162 282h1v3h-1zM163 282h1v3h-1zM164 284h1v2h-1zM165 284h1v1h-1zM166 284h1v1h-1zM167 284h1v2h-1zM168 284h1v3h-1zM169 285h1v2h-1zM170 280h1v6h-1zM171 280h1v3h-1zM172 282h1v4h-1zM173 285h1v1h-1zM174 283h1v3h-1zM175 283h1v5h-1zM176 281h1v7h-1zM177 281h1v3h-1zM178 280h1v4h-1zM179 280h1v2h-1zM180 281h1v2h-1zM181 282h1v3h-1zM182 284h1v1h-1zM183 284h1v2h-1zM184 285h1v2h-1zM185 285h1v2h-1zM186 285h1v2h-1zM187 286h1v1h-1zM188 286h1v4h-1zM189 287h1v3h-1zM190 285h1v3h-1zM191 284h1v2h-1zM192 284h1v3h-1zM193 284h1v3h-1zM194 284h1v3h-1zM195 286h1v2h-1zM196 286h1v3h-1zM197 282h1v7h-1zM198 282h1v5h-1zM199 285h1v2h-1zM200 285h1v3h-1zM201 286h1v2h-1zM202 285h1v2h-1zM203 285h1v2h-1zM204 285h1v2h-1zM205 285h1v1h-1zM206 282h1v4h-1zM207 282h1v7h-1zM208 285h1v4h-1zM209 283h1v3h-1zM210 282h1v2h-1zM211 282h1v3h-1zM212 282h1v3h-1zM213 282h1v2h-1zM214 283h1v2h-1zM215 284h1v2h-1zM216 285h1v5h-1zM217 287h1v3h-1zM218 287h1v2h-1zM219 288h1v1h-1zM220 281h1v8h-1zM221 281h1v4h-1zM222 284h1v1h-1zM223 284h1v2h-1zM224 281h1v5h-1zM225 281h1v3h-1zM226 282h1v2h-1zM227 282h1v6h-1zM228 284h1v4h-1zM229 284h1v1h-1zM230 284h1v1h-1zM231 284h1v4h-1zM232 285h1v3h-1zM233 283h1v3h-1zM234 283h1v2h-1zM235 284h1v3h-1zM236 286h1v2h-1zM237 284h1v3h-1zM238 282h1v3h-1zM239 282h1v6h-1zM240 286h1v2h-1zM241 285h1v2h-1zM242 285h1v4h-1zM243 285h1v4h-1zM244 285h1v2h-1zM245 286h1v1h-1zM246 286h1v1h-1zM247 283h1v4h-1zM248 283h1v1h-1zM249 281h1v3h-1zM250 281h1v2h-1zM251 282h1v2h-1zM252 283h1v3h-1zM253 283h1v3h-1zM254 282h1v2h-1zM255 282h1v2h-1zM256 282h1v1h-1zM257 282h1v5h-1zM258 284h1v3h-1zM259 283h1v2h-1zM260 283h1v3h-1zM261 285h1v4h-1zM262 285h1v4h-1zM263 285h1v4h-1zM264 287h1v2h-1zM265 280h1v8h-1zM266 280h1v5h-1zM267 284h1v2h-1zM268 282h1v4h-1zM269 282h1v2h-1zM270 283h1v2h-1zM271 284h1v2h-1zM272 285h1v2h-1zM273 286h1v3h-1zM274 285h1v4h-1zM275 285h1v4h-1zM276 286h1v3h-1zM277 282h1v5h-1zM278 282h1v4h-1zM279 285h1v1h-1zM280 280h1v6h-1zM281 280h1v3h-1zM282 277h1v6h-1zM283 277h1v6h-1zM284 282h1v5h-1zM285 286h1v3h-1zM286 285h1v4h-1zM287 283h1v3h-1zM288 281h1v3h-1zM289 281h1v5h-1zM290 283h1v3h-1zM291 283h1v3h-1zM292 285h1v2h-1zM293 286h1v4h-1zM294 288h1v2h-1zM295 286h1v3h-1zM296 284h1v3h-1zM297 282h1v3h-1zM298 282h1v4h-1zM299 283h1v3h-1zM300 282h1v2h-1zM301 282h1v7h-1zM302 288h1v2h-1zM303 288h1v2h-1zM304 287h1v2h-1zM305 281h1v7h-1zM306 281h1v4h-1zM307 284h1v2h-1zM308 284h1v2h-1zM309 284h1v2h-1zM310 283h1v3h-1zM311 283h1v7h-1zM312 287h1v3h-1zM313 285h1v3h-1zM314 284h1v2h-1zM315 284h1v1h-1zM316 284h1v3h-1zM317 285h1v2h-1zM318 283h1v3h-1zM319 283h1v3h-1zM320 285h1v2h-1zM321 284h1v3h-1zM322 284h1v3h-1zM323 283h1v4h-1zM324 283h1v4h-1zM325 286h1v1h-1zM326 286h1v2h-1zM327 284h1v4h-1zM328 284h1v5h-1zM329 286h1v3h-1zM330 282h1v5h-1zM331 282h1v2h-1zM332 281h1v3h-1zM333 281h1v5h-1zM334 282h1v4h-1zM335 282h1v1h-1zM336 282h1v1h-1zM337 282h1v4h-1zM338 283h1v3h-1zM339 283h1v2h-1zM340 280h1v5h-1zM341 280h1v4h-1zM342 283h1v2h-1zM343 284h1v4h-1zM344 287h1v3h-1zM345 285h1v5h-1zM346 283h1v3h-1zM347 283h1v2h-1zM348 282h1v2h-1zM349 282h1v2h-1zM350 282h1v2h-1zM351 282h1v2h-1zM352 283h1v2h-1zM353 284h1v1h-1zM354 283h1v2h-1zM355 283h1v1h-1zM356 278h1v6h-1zM357 278h1v3h-1zM358 280h1v4h-1zM359 283h1v2h-1zM360 284h1v3h-1zM361 286h1v3h-1zM362 281h1v8h-1zM363 281h1v4h-1zM364 284h1v2h-1zM365 282h1v3h-1zM366 281h1v2h-1zM367 281h1v3h-1zM368 283h1v5h-1zM369 281h1v7h-1zM370 281h1v5h-1zM371 282h1v4h-1zM372 282h1v3h-1zM373 284h1v2h-1zM374 285h1v1h-1zM375 284h1v2h-1zM376 283h1v2h-1zM377 283h1v2h-1zM378 283h1v2h-1zM379 283h1v2h-1zM380 282h1v2h-1zM381 281h1v2h-1zM382 280h1v2h-1zM383 280h1v3h-1zM384 279h1v4h-1zM385 279h1v1h-1zM386 279h1v3h-1zM387 279h1v3h-1zM388 279h1v3h-1zM389 281h1v2h-1zM390 279h1v4h-1zM391 279h1v1h-1zM392 277h1v3h-1zM393 277h1v4h-1zM394 280h1v2h-1zM395 280h1v2h-1zM396 279h1v3h-1zM397 279h1v2h-1zM398 280h1v5h-1zM399 284h1v2h-1zM400 281h1v5h-1zM401 280h1v2h-1zM402 280h1v3h-1zM403 282h1v3h-1zM404 283h1v2h-1zM405 281h1v3h-1zM406 281h1v2h-1zM407 280h1v2h-1zM408 280h1v2h-1zM409 280h1v2h-1zM410 280h1v3h-1zM411 282h1v1h-1zM412 282h1v2h-1zM413 281h1v3h-1zM414 280h1v2h-1zM415 279h1v2h-1zM416 278h1v2h-1zM417 277h1v2h-1zM418 277h1v5h-1zM419 281h1v2h-1zM420 279h1v4h-1zM421 279h1v4h-1zM422 279h1v4h-1zM423 279h1v4h-1zM424 279h1v4h-1zM425 279h1v1h-1zM426 279h1v3h-1zM427 277h1v5h-1zM428 277h1v3h-1zM429 279h1v1h-1zM430 276h1v4h-1zM431 276h1v1h-1zM432 276h1v4h-1zM433 279h1v2h-1zM434 280h1v2h-1zM435 280h1v2h-1zM436 279h1v3h-1zM437 277h1v3h-1zM438 277h1v4h-1zM439 280h1v3h-1zM440 281h1v2h-1zM441 280h1v2h-1zM442 278h1v3h-1zM443 278h1v3h-1zM444 278h1v3h-1zM445 278h1v3h-1zM446 277h1v4h-1zM447 277h1v4h-1zM448 280h1v1h-1zM449 279h1v2h-1zM450 278h1v2h-1zM451 278h1v3h-1zM452 280h1v2h-1zM453 278h1v4h-1zM454 278h1v4h-1zM455 281h1v2h-1zM456 281h1v2h-1zM457 281h1v2h-1zM458 281h1v2h-1zM459 276h1v7h-1zM460 276h1v5h-1zM461 277h1v4h-1zM462 277h1v3h-1zM463 279h1v2h-1zM464 277h1v4h-1zM465 277h1v4h-1zM466 278h1v3h-1zM467 278h1v2h-1zM468 278h1v2h-1zM469 276h1v3h-1zM470 276h1v3h-1zM471 277h1v2h-1zM472 276h1v2h-1zM473 276h1v4h-1zM474 276h1v4h-1zM475 276h1v3h-1zM476 278h1v2h-1zM477 278h1v1h-1zM478 277h1v2h-1zM479 277h1v2h-1zM480 278h1v4h-1zM481 274h1v8h-1zM482 274h1v3h-1zM483 276h1v2h-1zM484 276h1v3h-1zM485 276h1v3h-1zM486 276h1v2h-1zM487 277h1v2h-1zM488 277h1v2h-1zM489 277h1v1h-1zM490 275h1v3h-1zM491 275h1v2h-1zM492 276h1v2h-1zM493 277h1v2h-1zM494 275h1v4h-1zM495 275h1v2h-1zM496 275h1v2h-1zM497 276h1v3h-1zM498 273h1v6h-1zM499 273h1v3h-1zM500 275h1v2h-1zM501 275h1v2h-1zM502 274h1v2h-1zM503 274h1v4h-1zM504 274h1v4h-1zM505 274h1v3h-1zM506 276h1v1h-1zM507 275h1v2h-1zM508 273h1v3h-1zM509 273h1v1h-1zM510 273h1v4h-1zM511 275h1v2h-1zM512 275h1v2h-1zM513 274h1v3h-1zM514 274h1v5h-1zM515 275h1v4h-1z" fill="#ff00ff"/>
<rect x="59" y="204" width="2" height="1" fill="#0000ff"/>
<rect x="60" y="191" width="1" height="1" fill="#000090"/>
<rect x="59" y="178" width="2" height="1" fill="#0000ff"/>
<text x="42.79" y="182" fill="#000" font-size="12" font-weight="normal" textLength="11.60" lengthAdjust="spacingAndGlyphs">40</text>
<rect x="60" y="165" width="1" height="1" fill="#000090"/>
<rect x="59" y="152" width="2" height="1" fill="#0000ff"/>
<text x="42.57" y="156" fill="#000" font-size="12" font-weight="normal" textLength="11.82" lengthAdjust="spacingAndGlyphs">80</text>
<rect x="60" y="139" width="1" height="1" fill="#000090"/>
<rect x="59" y="126" width="2" height="1" fill="#0000ff"/>
<text x="36.18" y="130" fill="#000" font-size="12" font-weight="normal" textLength="18.24" lengthAdjust="spacingAndGlyphs">120</text>
<rect x="60" y="113" width="1" height="1" fill="#000090"/>
<rect x="59" y="100" width="2" height="1" fill="#0000ff"/>
<text x="36.18" y="104" fill="#000" font-size="12" font-weight="normal" textLength="18.24" lengthAdjust="spacingAndGlyphs">160</text>
<rect x="60" y="87" width="1" height="1" fill="#000090"/>
<rect x="59" y="73" width="2" height="1" fill="#0000ff"/>
<text x="36.46" y="77" fill="#000" font-size="12" font-weight="normal" textLength="17.95" lengthAdjust="spacingAndGlyphs">200</text>
<rect x="529" y="204" width="4" height="1" fill="#0000ff"/>
<rect x="529" y="196" width="2" height="1" fill="#0000ff"/>
<rect x="529" y="188" width="4" height="1" fill="#0000ff"/>
<text x="532.45" y="192" fill="#000" font-size="12" font-weight="normal" textLength="6.11" lengthAdjust="spacingAndGlyphs">2</text>
<rect x="529" y="180" width="2" height="1" fill="#0000ff"/>
<rect x="529" y="172" width="4" height="1" fill="#0000ff"/>
<text x="532.80" y="176" fill="#000" font-size="12" font-weight="normal" textLength="5.45" lengthAdjust="spacingAndGlyphs">4</text>
<rect x="529" y="164" width="2" height="1" fill="#0000ff"/>
<rect x="529" y="155" width="4" height="1" fill="#0000ff"/>
<text x="532.46" y="159" fill="#000" font-size="12" font-weight="normal" textLength="5.98" lengthAdjust="spacingAndGlyphs">6</text>
<rect x="529" y="147" width="2" height="1" fill="#0000ff"/>
<rect x="529" y="139" width="4" height="1" fill="#0000ff"/>
<text x="532.58" y="143" fill="#000" font-size="12" font-weight="normal" textLength="5.85" lengthAdjust="spacingAndGlyphs">8</text>
<rect x="529" y="131" width="2" height="1" fill="#0000ff"/>
<rect x="529" y="123" width="4" height="1" fill="#0000ff"/>
<text x="532.17" y="127" fill="#000" font-size="12" font-weight="normal" textLength="12.24" lengthAdjust="spacingAndGlyphs">10</text>
<rect x="529" y="114" width="2" height="1" fill="#0000ff"/>
<rect x="529" y="106" width="4" height="1" fill="#0000ff"/>
<text x="532.16" y="110" fill="#000" font-size="12" font-weight="normal" textLength="12.42" lengthAdjust="spacingAndGlyphs">12</text>
<rect x="529" y="98" width="2" height="1" fill="#0000ff"/>
<rect x="529" y="90" width="4" height="1" fill="#0000ff"/>
<text x="532.18" y="94" fill="#000" font-size="12" font-weight="normal" textLength="12.11" lengthAdjust="spacingAndGlyphs">14</text>
<rect x="529" y="82" width="2" height="1" fill="#0000ff"/>
<rect x="529" y="73" width="4" height="1" fill="#0000ff"/>
<text x="532.17" y="77" fill="#000" font-size="12" font-weight="normal" textLength="12.30" lengthAdjust="spacingAndGlyphs">16</text>
<rect x="59" y="354" width="2" height="1" fill="#0000ff"/>
<rect x="60" y="341" width="1" height="1" fill="#000090"/>
<rect x="59" y="328" width="2" height="1" fill="#0000ff"/>
<text x="48.80" y="332" fill="#000" font-size="12" font-weight="normal" textLength="5.45" lengthAdjust="spacingAndGlyphs">4</text>
<text x="532.80" y="332" fill="#000" font-size="12" font-weight="normal" textLength="5.45" lengthAdjust="spacingAndGlyphs">4</text>
<rect x="60" y="315" width="1" height="1" fill="#000090"/>
<rect x="59" y="302" width="2" height="1" fill="#0000ff"/>
<text x="48.58" y="306" fill="#000" font-size="12" font-weight="normal" textLength="5.85" lengthAdjust="spacingAndGlyphs">8</text>
<text x="532.58" y="306" fill="#000" font-size="12" font-weight="normal" textLength="5.85" lengthAdjust="spacingAndGlyphs">8</text>
<rect x="60" y="289" width="1" height="1" fill="#000090"/>
<rect x="59" y="276" width="2" height="1" fill="#0000ff"/>
<text x="42.16" y="280" fill="#000" font-size="12" font-weight="normal" textLength="12.42" lengthAdjust="spacingAndGlyphs">12</text>
<text x="532.16" y="280" fill="#000" font-size="12" font-weight="normal" textLength="12.42" lengthAdjust="spacingAndGlyphs">12</text>
<rect x="60" y="263" width="1" height="1" fill="#000090"/>
<rect x="59" y="250" width="2" height="1" fill="#0000ff"/>
<text x="42.17" y="254" fill="#000" font-size="12" font-weight="normal" textLength="12.30" lengthAdjust="spacingAndGlyphs">16</text>
<text x="532.17" y="254" fill="#000" font-size="12" font-weight="normal" textLength="12.30" lengthAdjust="spacingAndGlyphs">16</text>
<rect x="60" y="237" width="1" height="1" fill="#000090"/>
<rect x="59" y="223" width="2" height="1" fill="#0000ff"/>
<text x="42.46" y="227" fill="#000" font-size="12" font-weight="normal" textLength="11.94" lengthAdjust="spacingAndGlyphs">20</text>
<text x="532.46" y="227" fill="#000" font-size="12" font-weight="normal" textLength="11.94" lengthAdjust="spacingAndGlyphs">20</text>
<text x="56.60" y="217" fill="#000" font-size="12" font-weight="normal" textLength="13.74" lengthAdjust="spacingAndGlyphs">0.0</text>
<text x="56.60" y="367" fill="#000" font-size="12" font-weight="normal" textLength="13.74" lengthAdjust="spacingAndGlyphs">0.0</text>
<text x="107.60" y="217" fill="#000" font-size="12" font-weight="normal" textLength="13.80" lengthAdjust="spacingAndGlyphs">0.5</text>
<text x="107.60" y="367" fill="#000" font-size="12" font-weight="normal" textLength="13.80" lengthAdjust="spacingAndGlyphs">0.5</text>
<text x="159.24" y="217" fill="#000" font-size="12" font-weight="normal" textLength="14.12" lengthAdjust="spacingAndGlyphs">1.0</text>
<text x="159.24" y="367" fill="#000" font-size="12" font-weight="normal" textLength="14.12" lengthAdjust="spacingAndGlyphs">1.0</text>
<text x="211.24" y="217" fill="#000" font-size="12" font-weight="normal" textLength="14.17" lengthAdjust="spacingAndGlyphs">1.5</text>
<text x="211.24" y="367" fill="#000" font-size="12" font-weight="normal" textLength="14.17" lengthAdjust="spacingAndGlyphs">1.5</text>
<text x="263.50" y="217" fill="#000" font-size="12" font-weight="normal" textLength="13.85" lengthAdjust="spacingAndGlyphs">2.0</text>
<text x="263.50" y="367" fill="#000" font-size="12" font-weight="normal" textLength="13.85" lengthAdjust="spacingAndGlyphs">2.0</text>
<text x="315.50" y="217" fill="#000" font-size="12" font-weight="normal" textLength="13.90" lengthAdjust="spacingAndGlyphs">2.5</text>
<text x="315.50" y="367" fill="#000" font-size="12" font-weight="normal" textLength="13.90" lengthAdjust="spacingAndGlyphs">2.5</text>
<text x="367.66" y="217" fill="#000" font-size="12" font-weight="normal" textLength="13.69" lengthAdjust="spacingAndGlyphs">3.0</text>
<text x="367.66" y="367" fill="#000" font-size="12" font-weight="normal" textLength="13.69" lengthAdjust="spacingAndGlyphs">3.0</text>
<text x="419.65" y="217" fill="#000" font-size="12" font-weight="normal" textLength="13.74" lengthAdjust="spacingAndGlyphs">3.5</text>
<text x="419.65" y="367" fill="#000" font-size="12" font-weight="normal" textLength="13.74" lengthAdjust="spacingAndGlyphs">3.5</text>
<text x="470.81" y="217" fill="#000" font-size="12" font-weight="normal" textLength="13.54" lengthAdjust="spacingAndGlyphs">4.0</text>
<text x="470.81" y="367" fill="#000" font-size="12" font-weight="normal" textLength="13.54" lengthAdjust="spacingAndGlyphs">4.0</text>
<text x="522.80" y="217" fill="#000" font-size="12" font-weight="normal" textLength="13.59" lengthAdjust="spacingAndGlyphs">4.5</text>
<text x="522.80" y="367" fill="#000" font-size="12" font-weight="normal" textLength="13.59" lengthAdjust="spacingAndGlyphs">4.5</text>
<rect x="62" y="205" width="1" height="1" fill="#0000ff"/>
<rect x="62" y="355" width="1" height="1" fill="#0000ff"/>
<rect x="72" y="205" width="1" height="1" fill="#0000ff"/>
<rect x="72" y="355" width="1" height="1" fill="#0000ff"/>
<rect x="82" y="205" width="1" height="1" fill="#0000ff"/>
<rect x="82" y="355" width="1" height="1" fill="#0000ff"/>
<rect x="93" y="205" width="1" height="1" fill="#0000ff"/>
<rect x="93" y="355" width="1" height="1" fill="#0000ff"/>
<rect x="103" y="205" width="1" height="1" fill="#0000ff"/>
<rect x="103" y="355" width="1" height="1" fill="#0000ff"/>
<rect x="113" y="205" width="1" height="1" fill="#0000ff"/>
<rect x="113" y="355" width="1" height="1" fill="#0000ff"/>
<rect x="124" y="205" width="1" height="1" fill="#0000ff"/>
<rect x="124" y="355" width="1" height="1" fill="#0000ff"/>
<rect x="134" y="205" width="1" height="1" fill="#0000ff"/>
<rect x="134" y="355" width="1" height="1" fill="#0000ff"/>
<rect x="145" y="205" width="1" height="1" fill="#0000ff"/>
<rect x="145" y="355" width="1" height="1" fill="#0000ff"/>
<rect x="155" y="205" width="1" height="1" fill="#0000ff"/>
<rect x="155" y="355" width="1" height="1" fill="#0000ff"/>
<rect x="165" y="205" width="1" height="1" fill="#0000ff"/>
<rect x="165" y="355" width="1" height="1" fill="#0000ff"/>
<rect x="176" y="205" width="1" height="1" fill="#0000ff"/>
<rect x="176" y="355" width="1" height="1" fill="#0000ff"/>
<rect x="186" y="205" width="1" height="1" fill="#0000ff"/>
<rect x="186" y="355" width="1" height="1" fill="#0000ff"/>
<rect x="196" y="205" width="1" height="1" fill="#0000ff"/>
<rect x="196" y="355" width="1" height="1" fill="#0000ff"/>
<rect x="207" y="205" width="1" height="1" fill="#0000ff"/>
<rect x="207" y="355" width="1" height="1" fill="#0000ff"/>
<rect x="217" y="205" width="1" height="1" fill="#0000ff"/>
<rect x="217" y="355" width="1" height="1" fill="#0000ff"/>
<rect x="228" y="205" width="1" height="1" fill="#0000ff"/>
<rect x="228" y="355" width="1" height="1" fill="#0000ff"/>
<rect x="238" y="205" width="1" height="1" fill="#0000ff"/>
<rect x="238" y="355" width="1" height="1" fill="#0000ff"/>
<rect x="248" y="205" width="1" height="1" fill="#0000ff"/>
<rect x="248" y="355" width="1" height="1" fill="#0000ff"/>
<rect x="259" y="205" width="1" height="1" fill="#0000ff"/>
<rect x="259" y="355" width="1" height="1" fill="#0000ff"/>
<rect x="269" y="205" width="1" height="1" fill="#0000ff"/>
<rect x="269" y="355" width="1" height="1" fill="#0000ff"/>
<rect x="279" y="205" width="1" height="1" fill="#0000ff"/>
<rect x="279" y="355" width="1" height="1" fill="#0000ff"/>
<rect x="290" y="205" width="1" height="1" fill="#0000ff"/>
<rect x="290" y="355" width="1" height="1" fill="#0000ff"/>
<rect x="300" y="205" width="1" height="1" fill="#0000ff"/>
<rect x="300" y="355" width="1" height="1" fill="#0000ff"/>
<rect x="311" y="205" width="1" height="1" fill="#0000ff"/>
<rect x="311" y="355" width="1" height="1" fill="#0000ff"/>
<rect x="321" y="205" width="1" height="1" fill="#0000ff"/>
<rect x="321" y="355" width="1" height="1" fill="#0000ff"/>
<rect x="331" y="205" width="1" height="1" fill="#0000ff"/>
<rect x="331" y="355" width="1" height="1" fill="#0000ff"/>
<rect x="342" y="205" width="1" height="1" fill="#0000ff"/>
<rect x="342" y="355" width="1" height="1" fill="#0000ff"/>
<rect x="352" y="205" width="1" height="1" fill="#0000ff"/>
<rect x="352" y="355" width="1" height="1" fill="#0000ff"/>
<rect x="362" y="205" width="1" height="1" fill="#0000ff"/>
<rect x="362" y="355" width="1" height="1" fill="#0000ff"/>
<rect x="373" y="205" width="1" height="1" fill="#0000ff"/>
<rect x="373" y="355" width="1" height="1" fill="#0000ff"/>
<rect x="383" y="205" width="1" height="1" fill="#0000ff"/>
<rect x="383" y="355" width="1" height="1" fill="#0000ff"/>
<rect x="393" y="205" width="1" height="1" fill="#0000ff"/>
<rect x="393" y="355" width="1" height="1" fill="#0000ff"/>
<rect x="404" y="205" width="1" height="1" fill="#0000ff"/>
<rect x="404" y="355" width="1" height="1" fill="#0000ff"/>
<rect x="414" y="205" width="1" height="1" fill="#0000ff"/>
<rect x="414" y="355" width="1" height="1" fill="#0000ff"/>
<rect x="425" y="205" width="1" height="1" fill="#0000ff"/>
<rect x="425" y="355" width="1" height="1" fill="#0000ff"/>
<rect x="435" y="205" width="1" height="1" fill="#0000ff"/>
<rect x="435" y="355" width="1" height="1" fill="#0000ff"/>
<rect x="445" y="205" width="1" height="1" fill="#0000ff"/>
<rect x="445" y="355" width="1" height="1" fill="#0000ff"/>
<rect x="456" y="205" width="1" height="1" fill="#0000ff"/>
<rect x="456" y="355" width="1" height="1" fill="#0000ff"/>
<rect x="466" y="205" width="1" height="1" fill="#0000ff"/>
<rect x="466" y="355" width="1" height="1" fill="#0000ff"/>
<rect x="476" y="205" width="1" height="1" fill="#0000ff"/>
<rect x="476" y="355" width="1" height="1" fill="#0000ff"/>
<rect x="487" y="205" width="1" height="1" fill="#0000ff"/>
<rect x="487" y="355" width="1" height="1" fill="#0000ff"/>
<rect x="497" y="205" width="1" height="1" fill="#0000ff"/>
<rect x="497" y="355" width="1" height="1" fill="#0000ff"/>
<rect x="508" y="205" width="1" height="1" fill="#0000ff"/>
<rect x="508" y="355" width="1" height="1" fill="#0000ff"/>
<rect x="518" y="205" width="1" height="1" fill="#0000ff"/>
<rect x="518" y="355" width="1" height="1" fill="#0000ff"/>
<rect x="562.5" y="59.5" width="67" height="18" rx="2.5" fill="#ffffff" stroke="#000080" stroke-width="1"/>
<rect x="564" y="70" width="64" height="6" fill="#c0c0c0"/>
<rect x="654.5" y="59.5" width="67" height="18" rx="2.5" fill="#ffffff" stroke="#000080" stroke-width="1"/>
<rect x="656" y="70" width="64" height="6" fill="#c0c0c0"/>
<rect x="657" y="61" width="1" height="1" fill="#a00000"/>
<rect x="657" y="75" width="1" height="1" fill="#808000"/>
<rect x="659" y="61" width="1" height="1" fill="#a00000"/>
<rect x="659" y="75" width="1" height="1" fill="#808000"/>
<rect x="661" y="61" width="1" height="1" fill="#a00000"/>
<rect x="661" y="75" width="1" height="1" fill="#808000"/>
<rect x="663" y="61" width="1" height="1" fill="#a00000"/>
<rect x="663" y="75" width="1" height="1" fill="#808000"/>
<rect x="665" y="61" width="1" height="1" fill="#a00000"/>
<rect x="665" y="75" width="1" height="1" fill="#808000"/>
<rect x="667" y="61" width="1" height="1" fill="#a00000"/>
<rect x="667" y="75" width="1" height="1" fill="#808000"/>
<rect x="669" y="61" width="1" height="1" fill="#a00000"/>
<rect x="669" y="75" width="1" height="1" fill="#808000"/>
<rect x="671" y="61" width="1" height="1" fill="#a00000"/>
<rect x="671" y="75" width="1" height="1" fill="#808000"/>
<rect x="673" y="61" width="1" height="1" fill="#a00000"/>
<rect x="673" y="75" width="1" height="1" fill="#808000"/>
<rect x="675" y="61" width="1" height="1" fill="#a00000"/>
<rect x="675" y="75" width="1" height="1" fill="#808000"/>
<rect x="677" y="61" width="1" height="1" fill="#a00000"/>
<rect x="677" y="75" width="1" height="1" fill="#808000"/>
<rect x="679" y="61" width="1" height="1" fill="#a00000"/>
<rect x="679" y="75" width="1" height="1" fill="#808000"/>
<rect x="681" y="61" width="1" height="1" fill="#a00000"/>
<rect x="681" y="75" width="1" height="1" fill="#808000"/>
<rect x="683" y="61" width="1" height="1" fill="#a00000"/>
<rect x="683" y="75" width="1" height="1" fill="#808000"/>
<rect x="685" y="61" width="1" height="1" fill="#a00000"/>
<rect x="685" y="75" width="1" height="1" fill="#808000"/>
<rect x="687" y="61" width="1" height="1" fill="#a00000"/>
<rect x="687" y="75" width="1" height="1" fill="#808000"/>
<rect x="689" y="61" width="1" height="1" fill="#a00000"/>
<rect x="689" y="75" width="1" height="1" fill="#808000"/>
<rect x="691" y="61" width="1" height="1" fill="#a00000"/>
<rect x="691" y="75" width="1" height="1" fill="#808000"/>
<rect x="693" y="61" width="1" height="1" fill="#a00000"/>
<rect x="693" y="75" width="1" height="1" fill="#808000"/>
<rect x="695" y="61" width="1" height="1" fill="#a00000"/>
<rect x="695" y="75" width="1" height="1" fill="#808000"/>
<rect x="697" y="61" width="1" height="1" fill="#a00000"/>
<rect x="697" y="75" width="1" height="1" fill="#808000"/>
<rect x="699" y="61" width="1" height="1" fill="#a00000"/>
<rect x="699" y="75" width="1" height="1" fill="#808000"/>
<rect x="701" y="61" width="1" height="1" fill="#a00000"/>
<rect x="701" y="75" width="1" height="1" fill="#808000"/>
<rect x="703" y="61" width="1" height="1" fill="#a00000"/>
<rect x="703" y="75" width="1" height="1" fill="#808000"/>
<rect x="705" y="61" width="1" height="1" fill="#a00000"/>
<rect x="705" y="75" width="1" height="1" fill="#808000"/>
<rect x="707" y="61" width="1" height="1" fill="#a00000"/>
<rect x="707" y="75" width="1" height="1" fill="#808000"/>
<rect x="709" y="61" width="1" height="1" fill="#a00000"/>
<rect x="709" y="75" width="1" height="1" fill="#808000"/>
<rect x="711" y="61" width="1" height="1" fill="#a00000"/>
<rect x="711" y="75" width="1" height="1" fill="#808000"/>
<rect x="713" y="61" width="1" height="1" fill="#a00000"/>
<rect x="713" y="75" width="1" height="1" fill="#808000"/>
<rect x="715" y="61" width="1" height="1" fill="#a00000"/>
<rect x="715" y="75" width="1" height="1" fill="#808000"/>
<rect x="717" y="61" width="1" height="1" fill="#a00000"/>
<rect x="717" y="75" width="1" height="1" fill="#808000"/>
<rect x="656" y="62" width="1" height="1" fill="#000000"/>
<rect x="719" y="62" width="1" height="1" fill="#000000"/>
<rect x="656" y="64" width="1" height="1" fill="#000000"/>
<rect x="719" y="64" width="1" height="1" fill="#000000"/>
<rect x="656" y="66" width="1" height="1" fill="#000000"/>
<rect x="719" y="66" width="1" height="1" fill="#000000"/>
<rect x="656" y="68" width="1" height="1" fill="#000000"/>
<rect x="719" y="68" width="1" height="1" fill="#000000"/>
<rect x="656" y="70" width="1" height="1" fill="#000000"/>
<rect x="719" y="70" width="1" height="1" fill="#000000"/>
<rect x="656" y="72" width="1" height="1" fill="#000000"/>
<rect x="719" y="72" width="1" height="1" fill="#000000"/>
<rect x="656" y="74" width="1" height="1" fill="#000000"/>
<rect x="719" y="74" width="1" height="1" fill="#000000"/>
<rect x="695" y="74" width="9" height="1" fill="#000"/>
<rect x="561" y="94" width="1" height="71" fill="#c0c0c0"/>
<rect x="562" y="93" width="1" height="1" fill="#c0c0c0"/>
<rect x="562" y="165" width="1" height="1" fill="#c0c0c0"/>
<rect x="563" y="92" width="159" height="1" fill="#c0c0c0"/>
<rect x="563" y="166" width="159" height="1" fill="#c0c0c0"/>
<rect x="722" y="93" width="1" height="1" fill="#c0c0c0"/>
<rect x="722" y="165" width="1" height="1" fill="#c0c0c0"/>
<rect x="567" y="86" width="65" height="11" fill="#ffffff"/>
<text x="568.02" y="126" fill="#000" font-size="12" font-weight="normal" textLength="13.94" lengthAdjust="spacingAndGlyphs">ID:</text>
<text x="568.09" y="156" fill="#000" font-size="12" font-weight="normal" textLength="30.93" lengthAdjust="spacingAndGlyphs">Label:</text>
<text x="616.00" y="111" fill="#000080" font-size="12" font-weight="normal" textLength="39.58" lengthAdjust="spacingAndGlyphs">DVD-R</text>
<text x="616.10" y="126" fill="#000080" font-size="12" font-weight="normal" textLength="69.42" lengthAdjust="spacingAndGlyphs">BeAll G40001</text>
<text x="616.43" y="141" fill="#000080" font-size="12" font-weight="normal" textLength="85.03" lengthAdjust="spacingAndGlyphs">23 January 2005</text>
<text x="616.48" y="156" fill="#000080" font-size="12" font-weight="normal" textLength="73.07" lengthAdjust="spacingAndGlyphs">CDS_TEST_B2</text>
<rect x="561" y="175" width="1" height="163" fill="#c0c0c0"/>
<rect x="562" y="174" width="1" height="1" fill="#c0c0c0"/>
<rect x="562" y="338" width="1" height="1" fill="#c0c0c0"/>
<rect x="563" y="173" width="159" height="1" fill="#c0c0c0"/>
<rect x="563" y="339" width="159" height="1" fill="#c0c0c0"/>
<rect x="722" y="174" width="1" height="1" fill="#c0c0c0"/>
<rect x="722" y="338" width="1" height="1" fill="#c0c0c0"/>
<rect x="569" y="168" width="45" height="10" fill="#ffffff"/>
<text x="569.48" y="176" fill="#0000ff" font-size="12" font-weight="normal" textLength="41.91" lengthAdjust="spacingAndGlyphs">Settings</text>
<rect x="631" y="185" width="82" height="20" fill="#808080"/>
<rect x="632" y="186" width="80" height="18" fill="#ffffff"/>
<rect x="695.5" y="186.5" width="16" height="17" rx="1.5" fill="#ffffff" stroke="#a8a8a8" stroke-width="1"/>
<rect x="696" y="194" width="15" height="9" fill="#c0c0c0"/>
<path d="M699 192 L703.5 196.5 L708 192" stroke="#808080" stroke-width="2" fill="none"/>
<rect x="631" y="209" width="70" height="18" fill="#c0c0c0"/>
<rect x="632" y="210" width="68" height="16" fill="#ffffff"/>
<text x="633.54" y="222" fill="#000" font-size="12" font-weight="normal" textLength="46.07" lengthAdjust="spacingAndGlyphs">0000 MB</text>
<rect x="631" y="232" width="70" height="18" fill="#c0c0c0"/>
<rect x="632" y="233" width="68" height="16" fill="#ffffff"/>
<text x="633.77" y="245" fill="#000" font-size="12" font-weight="normal" textLength="45.83" lengthAdjust="spacingAndGlyphs">4489 MB</text>
<rect x="569" y="255" width="13" height="13" fill="#1f8080"/>
<rect x="570" y="256" width="11" height="11" fill="#ffffff"/>
<path d="M572 261 L574.5 263.5 L579 258.5" stroke="#008000" stroke-width="2.2" fill="none" shape-rendering="auto"/>
<text x="584.49" y="266" fill="#000" font-size="12" font-weight="normal" textLength="68.00" lengthAdjust="spacingAndGlyphs">Show C1/PIE</text>
<rect x="569" y="272" width="13" height="13" fill="#1f8080"/>
<rect x="570" y="273" width="11" height="11" fill="#ffffff"/>
<path d="M572 278 L574.5 280.5 L579 275.5" stroke="#008000" stroke-width="2.2" fill="none" shape-rendering="auto"/>
<text x="584.48" y="283" fill="#000" font-size="12" font-weight="normal" textLength="68.00" lengthAdjust="spacingAndGlyphs">Show C2/PIF</text>
<rect x="569" y="288" width="13" height="13" fill="#1f8080"/>
<rect x="570" y="289" width="11" height="11" fill="#ffffff"/>
<path d="M572 294 L574.5 296.5 L579 291.5" stroke="#008000" stroke-width="2.2" fill="none" shape-rendering="auto"/>
<text x="584.47" y="299" fill="#000" font-size="12" font-weight="normal" textLength="58.67" lengthAdjust="spacingAndGlyphs">Show Jitter</text>
<rect x="569" y="305" width="13" height="13" fill="#1f8080"/>
<rect x="570" y="306" width="11" height="11" fill="#ffffff"/>
<path d="M572 311 L574.5 313.5 L579 308.5" stroke="#008000" stroke-width="2.2" fill="none" shape-rendering="auto"/>
<text x="584.50" y="316" fill="#000" font-size="12" font-weight="normal" textLength="93.17" lengthAdjust="spacingAndGlyphs">Show Read Speed</text>
<rect x="569" y="321" width="13" height="13" fill="#c0c0c0"/>
<rect x="570" y="322" width="11" height="11" fill="#ffffff"/>
<path d="M572 327 L574.5 329.5 L579 324.5" stroke="#c0c0c0" stroke-width="2.2" fill="none" shape-rendering="auto"/>
<text x="584.49" y="332" fill="#a0a0a0" font-size="12" font-weight="normal" textLength="93.17" lengthAdjust="spacingAndGlyphs">Show Write Speed</text>
<rect x="561" y="346" width="1" height="20" fill="#c0c0c0"/>
<rect x="562" y="345" width="1" height="1" fill="#c0c0c0"/>
<rect x="562" y="366" width="1" height="1" fill="#c0c0c0"/>
<rect x="563" y="344" width="159" height="1" fill="#c0c0c0"/>
<rect x="563" y="367" width="159" height="1" fill="#c0c0c0"/>
<rect x="722" y="345" width="1" height="1" fill="#c0c0c0"/>
<rect x="722" y="366" width="1" height="1" fill="#c0c0c0"/>
<text x="694.53" y="360" fill="#000080" font-size="12" font-weight="normal" textLength="13.09" lengthAdjust="spacingAndGlyphs">82</text>
<rect x="561" y="376" width="1" height="58" fill="#c0c0c0"/>
<rect x="562" y="375" width="1" height="1" fill="#c0c0c0"/>
<rect x="562" y="434" width="1" height="1" fill="#c0c0c0"/>
<rect x="563" y="374" width="159" height="1" fill="#c0c0c0"/>
<rect x="563" y="435" width="159" height="1" fill="#c0c0c0"/>
<rect x="722" y="375" width="1" height="1" fill="#c0c0c0"/>
<rect x="722" y="434" width="1" height="1" fill="#c0c0c0"/>
<text x="678.20" y="392" fill="#000080" font-size="12" font-weight="normal" textLength="30.18" lengthAdjust="spacingAndGlyphs">100 %</text>
<text x="661.77" y="411" fill="#000080" font-size="12" font-weight="normal" textLength="45.83" lengthAdjust="spacingAndGlyphs">4488 MB</text>
<text x="676.56" y="428" fill="#000080" font-size="12" font-weight="normal" textLength="31.67" lengthAdjust="spacingAndGlyphs">8.36 X</text>
<rect x="18.5" y="374.5" width="169" height="62" fill="none" stroke="#808080" stroke-width="1"/>
<rect x="36" y="368" width="54" height="12" fill="#ffffff"/>
<rect x="28" y="371" width="8" height="8" fill="#000"/>
<rect x="29" y="372" width="6" height="6" fill="#00ffff"/>
<text x="39.06" y="378" fill="#000" font-size="12" font-weight="normal" textLength="46.35" lengthAdjust="spacingAndGlyphs">PI Errors</text>
<text x="149.21" y="393" fill="#000080" font-size="12" font-weight="normal" textLength="26.23" lengthAdjust="spacingAndGlyphs">14.46</text>
<text x="156.13" y="411" fill="#000080" font-size="12" font-weight="normal" textLength="19.38" lengthAdjust="spacingAndGlyphs">158</text>
<text x="139.18" y="429" fill="#000080" font-size="12" font-weight="normal" textLength="36.27" lengthAdjust="spacingAndGlyphs">197463</text>
<rect x="198.5" y="374.5" width="169" height="62" fill="none" stroke="#808080" stroke-width="1"/>
<rect x="216" y="368" width="64" height="12" fill="#ffffff"/>
<rect x="208" y="371" width="8" height="8" fill="#000"/>
<rect x="209" y="372" width="6" height="6" fill="#ffff00"/>
<text x="219.07" y="378" fill="#000" font-size="12" font-weight="normal" textLength="55.32" lengthAdjust="spacingAndGlyphs">PI Failures</text>
<text x="337.22" y="393" fill="#000080" font-size="12" font-weight="normal" textLength="20.21" lengthAdjust="spacingAndGlyphs">1.25</text>
<text x="344.09" y="411" fill="#000080" font-size="12" font-weight="normal" textLength="13.48" lengthAdjust="spacingAndGlyphs">19</text>
<text x="327.18" y="429" fill="#000080" font-size="12" font-weight="normal" textLength="30.26" lengthAdjust="spacingAndGlyphs">14883</text>
<rect x="379.5" y="374.5" width="169" height="46" fill="none" stroke="#808080" stroke-width="1"/>
<rect x="397" y="368" width="31" height="12" fill="#ffffff"/>
<rect x="389" y="371" width="8" height="8" fill="#000"/>
<rect x="390" y="372" width="6" height="6" fill="#ff00ff"/>
<text x="401.82" y="378" fill="#000" font-size="12" font-weight="normal" textLength="26.33" lengthAdjust="spacingAndGlyphs">Jitter</text>
<text x="500.22" y="393" fill="#000080" font-size="12" font-weight="normal" textLength="38.14" lengthAdjust="spacingAndGlyphs">10.55 %</text>
<text x="506.23" y="411" fill="#000080" font-size="12" font-weight="normal" textLength="32.12" lengthAdjust="spacingAndGlyphs">12.7 %</text>
<text x="389.11" y="434" fill="#000" font-size="12" font-weight="normal" textLength="61.86" lengthAdjust="spacingAndGlyphs">PO Failures:</text>
<text x="531.50" y="434" fill="#000080" font-size="12" font-weight="normal" textLength="6.95" lengthAdjust="spacingAndGlyphs">0</text>
<path d="M584 62h4v1h-4zM590 62h4v1h-4zM584 63h4v1h-4zM590 63h4v1h-4zM584 64h1v1h-1zM587 64h1v1h-1zM590 64h1v1h-1zM593 64h1v1h-1zM584 65h4v1h-4zM590 65h4v1h-4zM584 66h1v1h-1zM593 66h1v1h-1zM584 67h1v1h-1zM586 67h6v1h-6zM593 67h1v1h-1zM584 68h1v1h-1zM587 68h1v1h-1zM590 68h1v1h-1zM593 68h1v1h-1zM584 69h10v1h-10zM584 70h1v1h-1zM587 70h1v1h-1zM590 70h1v1h-1zM593 70h1v1h-1zM584 71h1v1h-1zM587 71h1v1h-1zM590 71h1v1h-1zM593 71h1v1h-1zM584 72h1v1h-1zM586 72h1v1h-1zM590 72h1v1h-1zM592 72h2v1h-2zM597 62h1v1h-1zM602 62h1v1h-1zM597 63h1v1h-1zM602 63h1v1h-1zM595 64h5v1h-5zM602 64h1v1h-1zM604 64h1v1h-1zM597 65h1v1h-1zM599 65h1v1h-1zM601 65h1v1h-1zM605 65h1v1h-1zM596 66h1v1h-1zM599 66h6v1h-6zM606 66h1v1h-1zM596 67h1v1h-1zM599 67h1v1h-1zM596 68h1v1h-1zM598 68h1v1h-1zM601 68h5v1h-5zM597 69h2v1h-2zM601 69h1v1h-1zM605 69h1v1h-1zM597 70h3v1h-3zM601 70h1v1h-1zM605 70h1v1h-1zM597 71h1v1h-1zM599 71h1v1h-1zM601 71h5v1h-5zM596 72h1v1h-1zM601 72h1v1h-1zM605 72h1v1h-1zM670 62h1v1h-1zM675 62h1v1h-1zM670 63h1v1h-1zM675 63h4v1h-4zM669 64h1v1h-1zM671 64h1v1h-1zM674 64h1v1h-1zM678 64h1v1h-1zM669 65h1v1h-1zM671 65h1v1h-1zM673 65h3v1h-3zM677 65h1v1h-1zM670 66h1v1h-1zM672 66h2v1h-2zM676 66h1v1h-1zM668 67h5v1h-5zM675 67h3v1h-3zM670 68h1v1h-1zM674 68h1v1h-1zM678 68h1v1h-1zM669 69h2v1h-2zM672 69h2v1h-2zM675 69h3v1h-3zM669 70h2v1h-2zM672 70h1v1h-1zM668 71h1v1h-1zM670 71h1v1h-1zM674 71h3v1h-3zM670 72h1v1h-1zM677 72h1v1h-1zM681 62h10v1h-10zM688 63h2v1h-2zM687 64h2v1h-2zM686 65h1v1h-1zM686 66h1v1h-1zM686 67h1v1h-1zM686 68h1v1h-1zM686 69h1v1h-1zM686 70h1v1h-1zM686 71h1v1h-1zM683 72h4v1h-4zM694 63h1v1h-1zM693 64h1v1h-1zM693 65h1v1h-1zM693 66h1v1h-1zM692 67h1v1h-1zM692 68h1v1h-1zM693 69h1v1h-1zM693 70h1v1h-1zM693 71h1v1h-1zM694 72h1v1h-1zM697 63h1v1h-1zM703 63h1v1h-1zM698 64h1v1h-1zM702 64h1v1h-1zM698 65h2v1h-2zM701 65h1v1h-1zM699 66h1v1h-1zM701 66h1v1h-1zM700 67h1v1h-1zM699 68h1v1h-1zM701 68h1v1h-1zM698 69h1v1h-1zM701 69h2v1h-2zM697 70h2v1h-2zM702 70h1v1h-1zM697 71h1v1h-1zM703 71h1v1h-1zM705 63h1v1h-1zM706 64h1v1h-1zM706 65h1v1h-1zM707 66h1v1h-1zM707 67h1v1h-1zM707 68h1v1h-1zM707 69h1v1h-1zM706 70h1v1h-1zM706 71h1v1h-1zM705 72h1v1h-1zM573 102h1v1h-1zM572 103h6v1h-6zM572 104h1v1h-1zM577 104h1v1h-1zM571 105h1v1h-1zM576 105h1v1h-1zM569 106h2v1h-2zM572 106h2v1h-2zM576 106h1v1h-1zM574 107h1v1h-1zM576 107h1v1h-1zM575 108h1v1h-1zM574 109h1v1h-1zM572 110h2v1h-2zM571 111h1v1h-1zM585 102h1v1h-1zM584 103h1v1h-1zM583 104h1v1h-1zM581 105h2v1h-2zM579 106h2v1h-2zM583 106h1v1h-1zM583 107h1v1h-1zM583 108h1v1h-1zM583 109h1v1h-1zM583 110h1v1h-1zM595 101h1v1h-1zM594 102h1v1h-1zM596 102h1v1h-1zM587 103h9v1h-9zM594 104h1v1h-1zM594 105h1v1h-1zM594 106h1v1h-1zM593 107h1v1h-1zM592 108h2v1h-2zM591 109h1v1h-1zM588 110h3v1h-3zM598 105h1v1h-1zM598 110h1v1h-1zM570 131h8v1h-8zM570 132h1v1h-1zM577 132h1v1h-1zM570 133h1v1h-1zM577 133h1v1h-1zM570 134h1v1h-1zM577 134h1v1h-1zM570 135h8v1h-8zM570 136h1v1h-1zM577 136h1v1h-1zM570 137h1v1h-1zM577 137h1v1h-1zM570 138h1v1h-1zM577 138h1v1h-1zM570 139h1v1h-1zM577 139h1v1h-1zM570 140h8v1h-8zM570 141h1v1h-1zM577 141h1v1h-1zM583 131h1v1h-1zM589 131h1v1h-1zM583 132h1v1h-1zM589 132h1v1h-1zM582 133h1v1h-1zM589 133h1v1h-1zM582 134h1v1h-1zM584 134h8v1h-8zM581 135h2v1h-2zM589 135h1v1h-1zM580 136h3v1h-3zM585 136h1v1h-1zM589 136h1v1h-1zM582 137h1v1h-1zM585 137h2v1h-2zM589 137h1v1h-1zM582 138h1v1h-1zM586 138h1v1h-1zM589 138h1v1h-1zM582 139h1v1h-1zM589 139h1v1h-1zM582 140h1v1h-1zM589 140h1v1h-1zM582 141h1v1h-1zM587 141h3v1h-3zM593 135h1v1h-1zM593 140h1v1h-1zM572 188h1v1h-1zM569 189h6v1h-6zM576 189h4v1h-4zM572 190h1v1h-1zM570 191h5v1h-5zM570 192h11v1h-11zM570 193h1v1h-1zM572 193h1v1h-1zM574 193h1v1h-1zM577 193h1v1h-1zM570 194h5v1h-5zM577 194h1v1h-1zM572 195h1v1h-1zM576 195h1v1h-1zM579 195h1v1h-1zM569 196h6v1h-6zM576 196h1v1h-1zM579 196h1v1h-1zM572 197h1v1h-1zM576 197h4v1h-4zM572 198h1v1h-1zM575 198h1v1h-1zM580 198h1v1h-1zM582 188h1v1h-1zM586 188h1v1h-1zM590 188h1v1h-1zM582 189h2v1h-2zM587 189h1v1h-1zM589 189h1v1h-1zM583 190h1v1h-1zM585 190h7v1h-7zM588 191h1v1h-1zM588 192h1v1h-1zM581 193h3v1h-3zM585 193h7v1h-7zM583 194h1v1h-1zM588 194h1v1h-1zM583 195h1v1h-1zM587 195h1v1h-1zM589 195h1v1h-1zM583 196h1v1h-1zM586 196h2v1h-2zM590 196h1v1h-1zM582 197h4v1h-4zM591 197h1v1h-1zM582 198h1v1h-1zM585 198h8v1h-8zM594 188h1v1h-1zM600 188h1v1h-1zM594 189h2v1h-2zM597 189h7v1h-7zM595 190h1v1h-1zM600 190h1v1h-1zM597 191h7v1h-7zM597 192h1v1h-1zM600 192h1v1h-1zM603 192h1v1h-1zM593 193h3v1h-3zM597 193h7v1h-7zM595 194h1v1h-1zM599 194h2v1h-2zM595 195h1v1h-1zM598 195h5v1h-5zM595 196h1v1h-1zM597 196h1v1h-1zM600 196h1v1h-1zM603 196h1v1h-1zM594 197h3v1h-3zM600 197h1v1h-1zM593 198h2v1h-2zM597 198h8v1h-8zM611 188h1v1h-1zM606 189h11v1h-11zM606 190h1v1h-1zM609 190h1v1h-1zM613 190h1v1h-1zM606 191h10v1h-10zM606 192h1v1h-1zM609 192h5v1h-5zM606 193h1v1h-1zM606 194h1v1h-1zM608 194h7v1h-7zM606 195h1v1h-1zM609 195h1v1h-1zM613 195h2v1h-2zM606 196h1v1h-1zM610 196h1v1h-1zM612 196h1v1h-1zM606 197h1v1h-1zM610 197h4v1h-4zM605 198h1v1h-1zM607 198h3v1h-3zM614 198h2v1h-2zM637 190h8v1h-8zM637 191h8v1h-8zM637 192h1v1h-1zM644 192h1v1h-1zM637 193h8v1h-8zM635 194h12v1h-12zM637 195h1v1h-1zM640 195h1v1h-1zM637 196h9v1h-9zM637 197h4v1h-4zM642 197h1v1h-1zM645 197h1v1h-1zM637 198h1v1h-1zM640 198h1v1h-1zM642 198h1v1h-1zM644 198h1v1h-1zM635 199h6v1h-6zM643 199h2v1h-2zM640 200h3v1h-3zM645 200h2v1h-2zM653 190h1v1h-1zM653 191h1v1h-1zM653 192h1v1h-1zM649 193h10v1h-10zM653 194h2v1h-2zM653 195h2v1h-2zM653 196h1v1h-1zM655 196h1v1h-1zM652 197h1v1h-1zM655 197h2v1h-2zM651 198h1v1h-1zM656 198h1v1h-1zM650 199h1v1h-1zM657 199h2v1h-2zM649 200h1v1h-1zM658 200h1v1h-1zM569 214h4v1h-4zM575 214h4v1h-4zM569 215h4v1h-4zM575 215h4v1h-4zM569 216h1v1h-1zM572 216h1v1h-1zM575 216h1v1h-1zM578 216h1v1h-1zM569 217h4v1h-4zM575 217h4v1h-4zM569 218h1v1h-1zM578 218h1v1h-1zM569 219h1v1h-1zM571 219h6v1h-6zM578 219h1v1h-1zM569 220h1v1h-1zM572 220h1v1h-1zM575 220h1v1h-1zM578 220h1v1h-1zM569 221h10v1h-10zM569 222h1v1h-1zM572 222h1v1h-1zM575 222h1v1h-1zM578 222h1v1h-1zM569 223h1v1h-1zM572 223h1v1h-1zM575 223h1v1h-1zM578 223h1v1h-1zM569 224h1v1h-1zM571 224h1v1h-1zM575 224h1v1h-1zM577 224h2v1h-2zM582 214h1v1h-1zM587 214h1v1h-1zM582 215h1v1h-1zM587 215h1v1h-1zM580 216h5v1h-5zM587 216h1v1h-1zM589 216h1v1h-1zM582 217h1v1h-1zM584 217h1v1h-1zM586 217h1v1h-1zM590 217h1v1h-1zM581 218h1v1h-1zM584 218h6v1h-6zM591 218h1v1h-1zM581 219h1v1h-1zM584 219h1v1h-1zM581 220h1v1h-1zM583 220h1v1h-1zM586 220h5v1h-5zM582 221h2v1h-2zM586 221h1v1h-1zM590 221h1v1h-1zM582 222h3v1h-3zM586 222h1v1h-1zM590 222h1v1h-1zM582 223h1v1h-1zM584 223h1v1h-1zM586 223h5v1h-5zM581 224h1v1h-1zM586 224h1v1h-1zM590 224h1v1h-1zM571 236h1v1h-1zM576 236h1v1h-1zM571 237h1v1h-1zM576 237h4v1h-4zM570 238h1v1h-1zM572 238h1v1h-1zM575 238h1v1h-1zM579 238h1v1h-1zM570 239h1v1h-1zM572 239h1v1h-1zM574 239h3v1h-3zM578 239h1v1h-1zM571 240h1v1h-1zM573 240h2v1h-2zM577 240h1v1h-1zM569 241h5v1h-5zM576 241h3v1h-3zM571 242h1v1h-1zM575 242h1v1h-1zM579 242h1v1h-1zM570 243h2v1h-2zM573 243h2v1h-2zM576 243h3v1h-3zM570 244h2v1h-2zM573 244h1v1h-1zM569 245h1v1h-1zM571 245h1v1h-1zM575 245h3v1h-3zM571 246h1v1h-1zM578 246h1v1h-1zM582 236h10v1h-10zM589 237h2v1h-2zM588 238h2v1h-2zM587 239h1v1h-1zM587 240h1v1h-1zM587 241h1v1h-1zM587 242h1v1h-1zM587 243h1v1h-1zM587 244h1v1h-1zM587 245h1v1h-1zM584 246h4v1h-4zM596 236h1v1h-1zM600 236h1v1h-1zM595 237h1v1h-1zM600 237h1v1h-1zM595 238h1v1h-1zM597 238h7v1h-7zM595 239h1v1h-1zM602 239h1v1h-1zM594 240h2v1h-2zM598 240h1v1h-1zM602 240h1v1h-1zM593 241h1v1h-1zM595 241h1v1h-1zM598 241h1v1h-1zM602 241h1v1h-1zM595 242h1v1h-1zM598 242h1v1h-1zM602 242h1v1h-1zM595 243h1v1h-1zM598 243h1v1h-1zM601 243h1v1h-1zM595 244h1v1h-1zM601 244h1v1h-1zM595 245h10v1h-10zM595 246h1v1h-1zM606 236h10v1h-10zM606 237h1v1h-1zM609 237h1v1h-1zM612 237h1v1h-1zM615 237h1v1h-1zM606 238h10v1h-10zM605 239h12v1h-12zM606 240h1v1h-1zM608 240h7v1h-7zM606 241h1v1h-1zM608 241h1v1h-1zM614 241h1v1h-1zM606 242h1v1h-1zM608 242h7v1h-7zM606 243h1v1h-1zM608 243h7v1h-7zM606 244h1v1h-1zM608 244h7v1h-7zM606 245h11v1h-11zM606 246h1v1h-1zM571 352h7v1h-7zM571 353h1v1h-1zM577 353h1v1h-1zM571 354h1v1h-1zM577 354h1v1h-1zM571 355h7v1h-7zM569 357h4v1h-4zM575 357h4v1h-4zM569 358h1v1h-1zM572 358h1v1h-1zM575 358h1v1h-1zM578 358h1v1h-1zM569 359h1v1h-1zM572 359h1v1h-1zM575 359h1v1h-1zM578 359h1v1h-1zM569 360h1v1h-1zM572 360h1v1h-1zM575 360h1v1h-1zM578 360h1v1h-1zM569 361h4v1h-4zM575 361h4v1h-4zM569 362h1v1h-1zM572 362h1v1h-1zM575 362h1v1h-1zM578 362h1v1h-1zM581 352h9v1h-9zM581 353h11v1h-11zM581 354h1v1h-1zM584 354h1v1h-1zM586 354h1v1h-1zM589 354h1v1h-1zM581 355h1v1h-1zM584 355h1v1h-1zM589 355h1v1h-1zM582 356h8v1h-8zM582 357h8v1h-8zM582 358h8v1h-8zM582 359h1v1h-1zM589 359h1v1h-1zM582 360h8v1h-8zM583 361h2v1h-2zM587 361h2v1h-2zM581 362h2v1h-2zM589 362h2v1h-2zM592 354h7v1h-7zM598 355h1v1h-1zM597 356h1v1h-1zM597 357h1v1h-1zM596 358h1v1h-1zM595 359h1v1h-1zM597 359h1v1h-1zM593 360h2v1h-2zM598 360h2v1h-2zM592 361h1v1h-1zM599 361h1v1h-1zM602 354h7v1h-7zM608 355h1v1h-1zM608 356h1v1h-1zM608 357h1v1h-1zM608 358h1v1h-1zM608 359h1v1h-1zM608 360h1v1h-1zM602 361h7v1h-7zM610 354h9v1h-9zM618 355h1v1h-1zM614 356h1v1h-1zM617 356h2v1h-2zM614 357h1v1h-1zM616 357h2v1h-2zM614 358h1v1h-1zM613 359h1v1h-1zM613 360h1v1h-1zM612 361h1v1h-1zM620 356h1v1h-1zM620 361h1v1h-1zM570 382h1v1h-1zM574 382h1v1h-1zM577 382h1v1h-1zM570 383h2v1h-2zM574 383h1v1h-1zM577 383h1v1h-1zM571 384h1v1h-1zM573 384h7v1h-7zM572 385h2v1h-2zM576 385h1v1h-1zM573 386h7v1h-7zM569 387h3v1h-3zM573 387h1v1h-1zM576 387h1v1h-1zM571 388h1v1h-1zM573 388h7v1h-7zM571 389h1v1h-1zM573 389h1v1h-1zM576 389h1v1h-1zM571 390h1v1h-1zM573 390h7v1h-7zM570 391h3v1h-3zM569 392h2v1h-2zM573 392h8v1h-8zM584 382h1v1h-1zM586 382h6v1h-6zM583 383h1v1h-1zM582 384h1v1h-1zM584 385h1v1h-1zM583 386h1v1h-1zM585 386h8v1h-8zM582 387h2v1h-2zM590 387h1v1h-1zM581 388h1v1h-1zM583 388h1v1h-1zM590 388h1v1h-1zM583 389h1v1h-1zM590 389h1v1h-1zM583 390h1v1h-1zM590 390h1v1h-1zM583 391h1v1h-1zM590 391h1v1h-1zM583 392h1v1h-1zM587 392h3v1h-3zM595 382h1v1h-1zM599 382h1v1h-1zM601 382h1v1h-1zM595 383h1v1h-1zM599 383h1v1h-1zM602 383h1v1h-1zM593 384h1v1h-1zM595 384h1v1h-1zM599 384h1v1h-1zM602 384h1v1h-1zM593 385h1v1h-1zM595 385h9v1h-9zM595 386h1v1h-1zM599 386h1v1h-1zM595 387h1v1h-1zM599 387h2v1h-2zM594 388h2v1h-2zM599 388h2v1h-2zM592 389h2v1h-2zM595 389h1v1h-1zM598 389h1v1h-1zM601 389h1v1h-1zM595 390h1v1h-1zM598 390h1v1h-1zM601 390h1v1h-1zM595 391h1v1h-1zM597 391h1v1h-1zM602 391h1v1h-1zM595 392h2v1h-2zM605 382h1v1h-1zM608 382h7v1h-7zM606 383h1v1h-1zM608 383h1v1h-1zM614 383h1v1h-1zM608 384h1v1h-1zM614 384h1v1h-1zM604 385h2v1h-2zM608 385h1v1h-1zM614 385h1v1h-1zM605 386h2v1h-2zM608 386h7v1h-7zM610 387h1v1h-1zM612 387h1v1h-1zM610 388h1v1h-1zM612 388h1v1h-1zM606 389h1v1h-1zM609 389h1v1h-1zM612 389h1v1h-1zM606 390h1v1h-1zM609 390h1v1h-1zM612 390h1v1h-1zM615 390h1v1h-1zM605 391h1v1h-1zM608 391h2v1h-2zM612 391h1v1h-1zM615 391h1v1h-1zM605 392h1v1h-1zM607 392h1v1h-1zM612 392h3v1h-3zM617 386h1v1h-1zM617 391h1v1h-1zM577 402h1v1h-1zM573 403h1v1h-1zM576 403h1v1h-1zM578 403h1v1h-1zM573 404h1v1h-1zM577 404h2v1h-2zM569 405h9v1h-9zM573 406h1v1h-1zM570 407h1v1h-1zM573 407h1v1h-1zM575 407h1v1h-1zM570 408h1v1h-1zM573 408h1v1h-1zM576 408h1v1h-1zM570 409h1v1h-1zM573 409h1v1h-1zM576 409h1v1h-1zM569 410h1v1h-1zM573 410h1v1h-1zM577 410h1v1h-1zM569 411h1v1h-1zM573 411h1v1h-1zM577 411h1v1h-1zM573 412h1v1h-1zM586 403h1v1h-1zM580 404h3v1h-3zM585 404h1v1h-1zM587 404h1v1h-1zM579 406h1v1h-1zM586 406h1v1h-1zM580 407h2v1h-2zM586 407h1v1h-1zM585 408h1v1h-1zM584 409h2v1h-2zM583 410h2v1h-2zM579 411h4v1h-4zM590 403h2v1h-2zM592 404h1v1h-1zM596 405h1v1h-1zM588 406h3v1h-3zM596 406h1v1h-1zM596 407h1v1h-1zM595 408h1v1h-1zM594 409h1v1h-1zM592 410h2v1h-2zM589 411h3v1h-3zM599 405h7v1h-7zM605 406h1v1h-1zM605 407h1v1h-1zM599 408h7v1h-7zM605 409h1v1h-1zM605 410h1v1h-1zM599 411h7v1h-7zM607 404h2v1h-2zM609 405h1v1h-1zM614 405h1v1h-1zM614 406h1v1h-1zM614 407h1v1h-1zM613 408h1v1h-1zM612 409h2v1h-2zM610 410h2v1h-2zM607 411h3v1h-3zM617 406h1v1h-1zM617 411h1v1h-1zM570 419h1v1h-1zM576 419h1v1h-1zM570 420h2v1h-2zM573 420h7v1h-7zM571 421h1v1h-1zM576 421h1v1h-1zM573 422h7v1h-7zM573 423h1v1h-1zM576 423h1v1h-1zM579 423h1v1h-1zM569 424h3v1h-3zM573 424h7v1h-7zM571 425h1v1h-1zM575 425h2v1h-2zM571 426h1v1h-1zM574 426h5v1h-5zM571 427h1v1h-1zM573 427h1v1h-1zM576 427h1v1h-1zM579 427h1v1h-1zM570 428h3v1h-3zM576 428h1v1h-1zM569 429h2v1h-2zM573 429h8v1h-8zM587 419h1v1h-1zM582 420h11v1h-11zM582 421h1v1h-1zM585 421h1v1h-1zM589 421h1v1h-1zM582 422h10v1h-10zM582 423h1v1h-1zM585 423h5v1h-5zM582 424h1v1h-1zM582 425h1v1h-1zM584 425h7v1h-7zM582 426h1v1h-1zM585 426h1v1h-1zM589 426h2v1h-2zM582 427h1v1h-1zM586 427h1v1h-1zM588 427h1v1h-1zM582 428h1v1h-1zM586 428h4v1h-4zM581 429h1v1h-1zM583 429h3v1h-3zM590 429h2v1h-2zM594 423h1v1h-1zM594 428h1v1h-1zM28 384h10v1h-10zM32 385h1v1h-1zM29 386h1v1h-1zM32 386h1v1h-1zM36 386h1v1h-1zM29 387h1v1h-1zM32 387h1v1h-1zM36 387h1v1h-1zM30 388h1v1h-1zM32 388h1v1h-1zM35 388h1v1h-1zM32 389h1v1h-1zM27 390h12v1h-12zM32 391h1v1h-1zM32 392h1v1h-1zM32 393h1v1h-1zM32 394h1v1h-1zM41 384h1v1h-1zM45 384h1v1h-1zM41 385h1v1h-1zM44 385h6v1h-6zM41 386h1v1h-1zM44 386h1v1h-1zM49 386h1v1h-1zM39 387h4v1h-4zM49 387h1v1h-1zM41 388h1v1h-1zM45 388h3v1h-3zM49 388h1v1h-1zM41 389h1v1h-1zM49 389h1v1h-1zM41 390h1v1h-1zM49 390h1v1h-1zM41 391h1v1h-1zM44 391h4v1h-4zM49 391h1v1h-1zM41 392h2v1h-2zM49 392h1v1h-1zM39 393h2v1h-2zM49 393h1v1h-1zM47 394h3v1h-3zM52 388h1v1h-1zM52 393h1v1h-1zM29 402h8v1h-8zM29 403h8v1h-8zM29 404h1v1h-1zM36 404h1v1h-1zM29 405h8v1h-8zM27 406h12v1h-12zM29 407h1v1h-1zM32 407h1v1h-1zM29 408h9v1h-9zM29 409h4v1h-4zM34 409h1v1h-1zM37 409h1v1h-1zM29 410h1v1h-1zM32 410h1v1h-1zM34 410h1v1h-1zM36 410h1v1h-1zM27 411h6v1h-6zM35 411h2v1h-2zM32 412h3v1h-3zM37 412h2v1h-2zM44 402h1v1h-1zM44 403h1v1h-1zM44 404h1v1h-1zM40 405h10v1h-10zM44 406h2v1h-2zM44 407h2v1h-2zM44 408h1v1h-1zM46 408h1v1h-1zM43 409h1v1h-1zM46 409h2v1h-2zM42 410h1v1h-1zM47 410h1v1h-1zM41 411h1v1h-1zM48 411h2v1h-2zM40 412h1v1h-1zM49 412h1v1h-1zM52 406h1v1h-1zM52 411h1v1h-1zM31 419h2v1h-2zM30 420h1v1h-1zM33 420h1v1h-1zM29 421h1v1h-1zM34 421h1v1h-1zM27 422h10v1h-10zM28 425h8v1h-8zM28 426h1v1h-1zM35 426h1v1h-1zM28 427h1v1h-1zM35 427h1v1h-1zM28 428h8v1h-8zM28 429h1v1h-1zM35 429h1v1h-1zM39 419h4v1h-4zM46 419h1v1h-1zM46 420h1v1h-1zM38 421h6v1h-6zM46 421h1v1h-1zM46 422h1v1h-1zM39 423h4v1h-4zM44 423h6v1h-6zM39 424h4v1h-4zM46 424h1v1h-1zM46 425h1v1h-1zM39 426h4v1h-4zM46 426h1v1h-1zM39 427h1v1h-1zM42 427h1v1h-1zM46 427h1v1h-1zM39 428h4v1h-4zM46 428h1v1h-1zM39 429h1v1h-1zM46 429h1v1h-1zM56 423h1v1h-1zM56 428h1v1h-1zM210 384h10v1h-10zM214 385h1v1h-1zM211 386h1v1h-1zM214 386h1v1h-1zM218 386h1v1h-1zM211 387h1v1h-1zM214 387h1v1h-1zM218 387h1v1h-1zM212 388h1v1h-1zM214 388h1v1h-1zM217 388h1v1h-1zM214 389h1v1h-1zM209 390h12v1h-12zM214 391h1v1h-1zM214 392h1v1h-1zM214 393h1v1h-1zM214 394h1v1h-1zM223 384h1v1h-1zM227 384h1v1h-1zM223 385h1v1h-1zM226 385h6v1h-6zM223 386h1v1h-1zM226 386h1v1h-1zM231 386h1v1h-1zM221 387h4v1h-4zM231 387h1v1h-1zM223 388h1v1h-1zM227 388h3v1h-3zM231 388h1v1h-1zM223 389h1v1h-1zM231 389h1v1h-1zM223 390h1v1h-1zM231 390h1v1h-1zM223 391h1v1h-1zM226 391h4v1h-4zM231 391h1v1h-1zM223 392h2v1h-2zM231 392h1v1h-1zM221 393h2v1h-2zM231 393h1v1h-1zM229 394h3v1h-3zM234 388h1v1h-1zM234 393h1v1h-1zM211 402h8v1h-8zM211 403h8v1h-8zM211 404h1v1h-1zM218 404h1v1h-1zM211 405h8v1h-8zM209 406h12v1h-12zM211 407h1v1h-1zM214 407h1v1h-1zM211 408h9v1h-9zM211 409h4v1h-4zM216 409h1v1h-1zM219 409h1v1h-1zM211 410h1v1h-1zM214 410h1v1h-1zM216 410h1v1h-1zM218 410h1v1h-1zM209 411h6v1h-6zM217 411h2v1h-2zM214 412h3v1h-3zM219 412h2v1h-2zM226 402h1v1h-1zM226 403h1v1h-1zM226 404h1v1h-1zM222 405h10v1h-10zM226 406h2v1h-2zM226 407h2v1h-2zM226 408h1v1h-1zM228 408h1v1h-1zM225 409h1v1h-1zM228 409h2v1h-2zM224 410h1v1h-1zM229 410h1v1h-1zM223 411h1v1h-1zM230 411h2v1h-2zM222 412h1v1h-1zM231 412h1v1h-1zM234 406h1v1h-1zM234 411h1v1h-1zM213 419h2v1h-2zM212 420h1v1h-1zM215 420h1v1h-1zM211 421h1v1h-1zM216 421h1v1h-1zM209 422h10v1h-10zM210 425h8v1h-8zM210 426h1v1h-1zM217 426h1v1h-1zM210 427h1v1h-1zM217 427h1v1h-1zM210 428h8v1h-8zM210 429h1v1h-1zM217 429h1v1h-1zM221 419h4v1h-4zM228 419h1v1h-1zM228 420h1v1h-1zM220 421h6v1h-6zM228 421h1v1h-1zM228 422h1v1h-1zM221 423h4v1h-4zM226 423h6v1h-6zM221 424h4v1h-4zM228 424h1v1h-1zM228 425h1v1h-1zM221 426h4v1h-4zM228 426h1v1h-1zM221 427h1v1h-1zM224 427h1v1h-1zM228 427h1v1h-1zM221 428h4v1h-4zM228 428h1v1h-1zM221 429h1v1h-1zM228 429h1v1h-1zM238 423h1v1h-1zM238 428h1v1h-1zM390 384h10v1h-10zM394 385h1v1h-1zM391 386h1v1h-1zM394 386h1v1h-1zM398 386h1v1h-1zM391 387h1v1h-1zM394 387h1v1h-1zM398 387h1v1h-1zM392 388h1v1h-1zM394 388h1v1h-1zM397 388h1v1h-1zM394 389h1v1h-1zM389 390h12v1h-12zM394 391h1v1h-1zM394 392h1v1h-1zM394 393h1v1h-1zM394 394h1v1h-1zM403 384h1v1h-1zM407 384h1v1h-1zM403 385h1v1h-1zM406 385h6v1h-6zM403 386h1v1h-1zM406 386h1v1h-1zM411 386h1v1h-1zM401 387h4v1h-4zM411 387h1v1h-1zM403 388h1v1h-1zM407 388h3v1h-3zM411 388h1v1h-1zM403 389h1v1h-1zM411 389h1v1h-1zM403 390h1v1h-1zM411 390h1v1h-1zM403 391h1v1h-1zM406 391h4v1h-4zM411 391h1v1h-1zM403 392h2v1h-2zM411 392h1v1h-1zM401 393h2v1h-2zM411 393h1v1h-1zM409 394h3v1h-3zM414 388h1v1h-1zM414 393h1v1h-1zM391 402h8v1h-8zM391 403h8v1h-8zM391 404h1v1h-1zM398 404h1v1h-1zM391 405h8v1h-8zM389 406h12v1h-12zM391 407h1v1h-1zM394 407h1v1h-1zM391 408h9v1h-9zM391 409h4v1h-4zM396 409h1v1h-1zM399 409h1v1h-1zM391 410h1v1h-1zM394 410h1v1h-1zM396 410h1v1h-1zM398 410h1v1h-1zM389 411h6v1h-6zM397 411h2v1h-2zM394 412h3v1h-3zM399 412h2v1h-2zM406 402h1v1h-1zM406 403h1v1h-1zM406 404h1v1h-1zM402 405h10v1h-10zM406 406h2v1h-2zM406 407h2v1h-2zM406 408h1v1h-1zM408 408h1v1h-1zM405 409h1v1h-1zM408 409h2v1h-2zM404 410h1v1h-1zM409 410h1v1h-1zM403 411h1v1h-1zM410 411h2v1h-2zM402 412h1v1h-1zM411 412h1v1h-1zM414 406h1v1h-1zM414 411h1v1h-1z" fill="#000"/>
<path d="M577 88h2v1h-2zM571 89h7v1h-7zM579 89h1v1h-1zM570 92h9v1h-9zM574 93h1v1h-1zM574 94h1v1h-1zM573 95h1v1h-1zM573 96h1v1h-1zM571 97h2v1h-2zM585 90h2v1h-2zM584 91h2v1h-2zM583 92h1v1h-1zM581 93h3v1h-3zM580 94h1v1h-1zM583 94h1v1h-1zM583 95h1v1h-1zM583 96h1v1h-1zM583 97h1v1h-1zM589 89h7v1h-7zM595 90h1v1h-1zM594 91h1v1h-1zM594 92h1v1h-1zM593 93h1v1h-1zM592 94h1v1h-1zM594 94h1v1h-1zM590 95h2v1h-2zM595 95h2v1h-2zM589 96h1v1h-1zM596 96h1v1h-1zM602 88h1v1h-1zM601 89h5v1h-5zM600 90h1v1h-1zM606 90h1v1h-1zM599 91h2v1h-2zM605 91h1v1h-1zM599 92h1v1h-1zM605 92h1v1h-1zM604 93h1v1h-1zM603 94h2v1h-2zM602 95h2v1h-2zM600 96h2v1h-2zM609 87h1v1h-1zM611 87h7v1h-7zM609 88h1v1h-1zM614 88h1v1h-1zM608 89h3v1h-3zM612 89h6v1h-6zM607 90h1v1h-1zM609 90h1v1h-1zM611 90h8v1h-8zM607 91h1v1h-1zM609 91h1v1h-1zM607 92h1v1h-1zM609 92h1v1h-1zM612 92h6v1h-6zM609 93h1v1h-1zM612 93h6v1h-6zM609 94h1v1h-1zM612 94h1v1h-1zM617 94h1v1h-1zM609 95h1v1h-1zM612 95h6v1h-6zM609 96h1v1h-1zM612 96h1v1h-1zM617 96h1v1h-1zM609 97h1v1h-1zM612 97h1v1h-1zM615 97h3v1h-3zM621 87h1v1h-1zM624 87h5v1h-5zM619 88h6v1h-6zM628 88h1v1h-1zM621 89h1v1h-1zM624 89h1v1h-1zM628 89h1v1h-1zM618 90h7v1h-7zM627 90h2v1h-2zM619 91h1v1h-1zM622 91h1v1h-1zM624 91h1v1h-1zM618 92h11v1h-11zM621 93h1v1h-1zM624 93h1v1h-1zM626 93h1v1h-1zM628 93h1v1h-1zM619 94h6v1h-6zM626 94h1v1h-1zM628 94h1v1h-1zM621 95h1v1h-1zM624 95h1v1h-1zM627 95h1v1h-1zM621 96h1v1h-1zM624 96h1v1h-1zM626 96h1v1h-1zM628 96h1v1h-1zM621 97h1v1h-1zM624 97h2v1h-2zM629 97h1v1h-1z" fill="#0000ff"/>
</svg></body></html>
